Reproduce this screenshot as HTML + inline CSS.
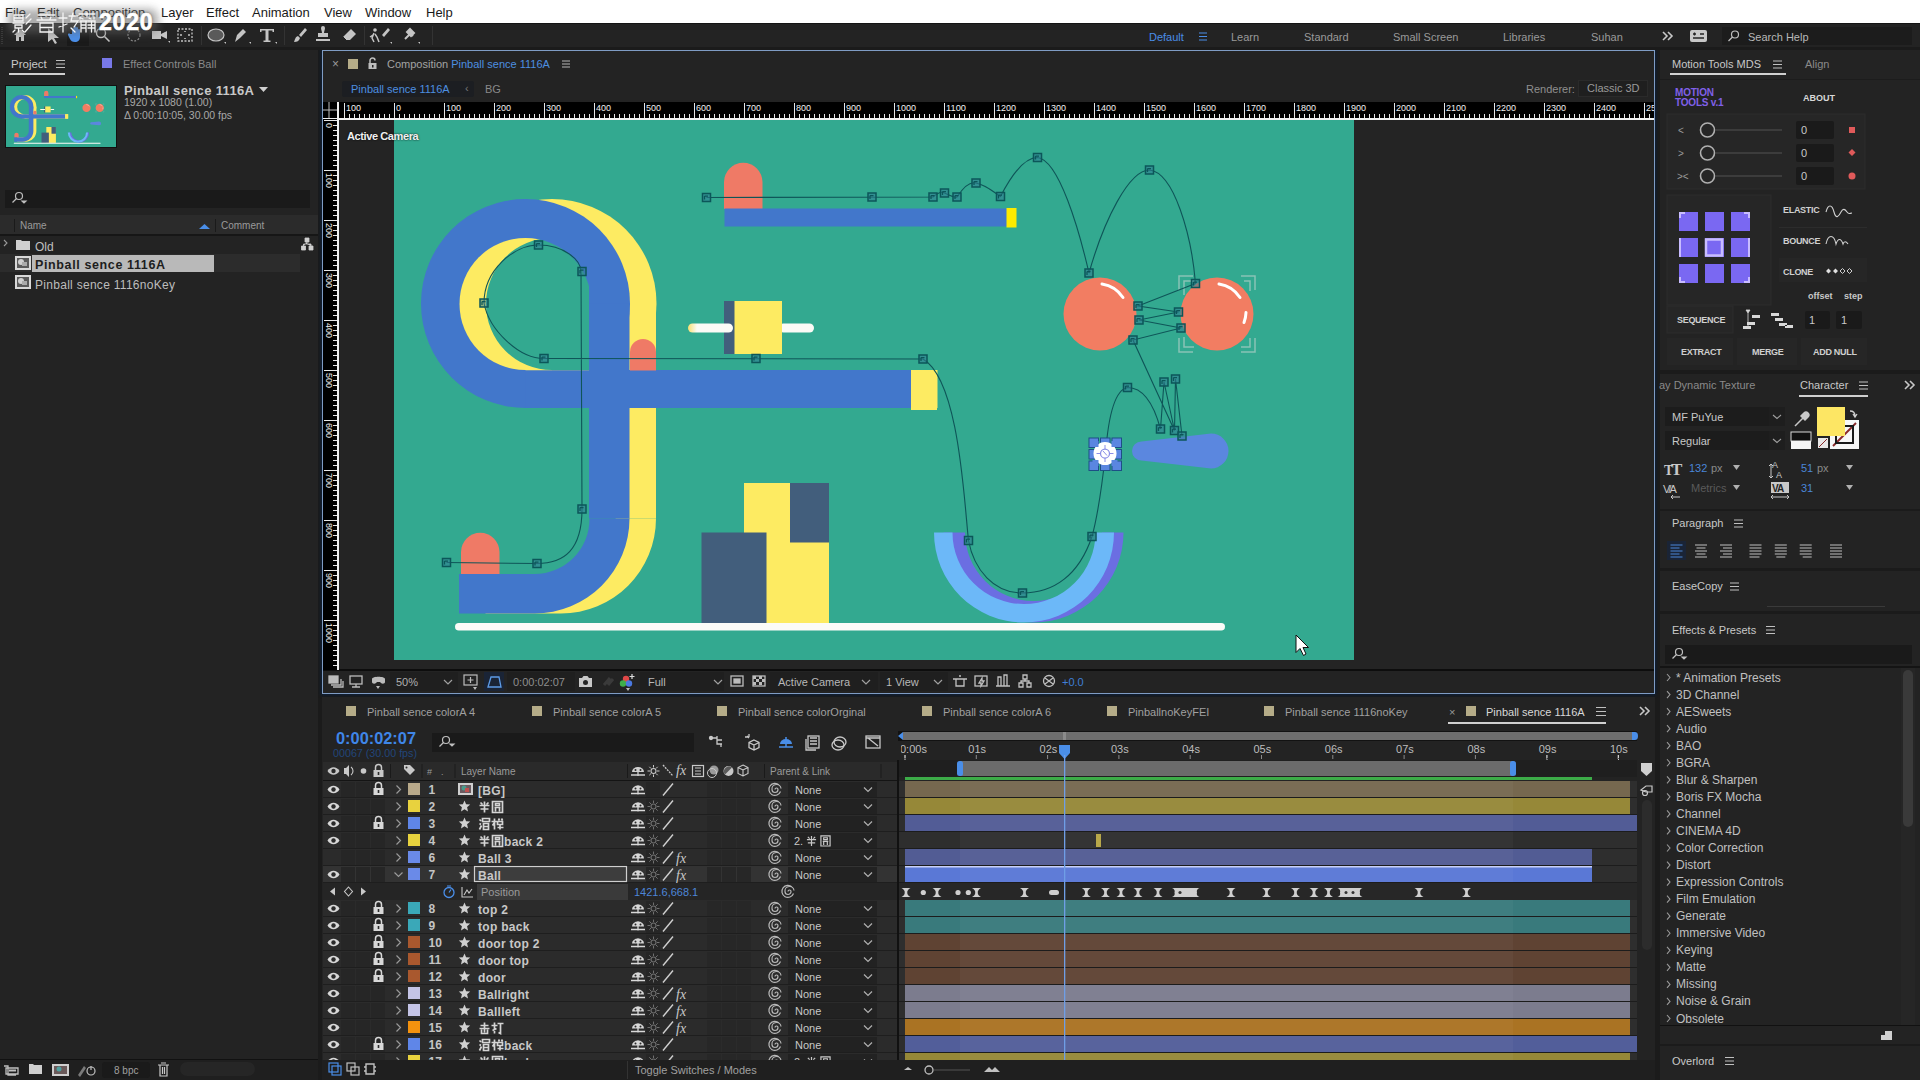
<!DOCTYPE html>
<html><head><meta charset="utf-8"><title>AE</title>
<style>
*{margin:0;padding:0;box-sizing:border-box}
html,body{width:1920px;height:1080px;overflow:hidden;background:#1b1b1b;font-family:"Liberation Sans",sans-serif;color:#a8a8a8;font-size:11px}
.a{position:absolute}
.t{position:absolute;white-space:nowrap;line-height:1}
#menu{left:0;top:0;width:1920px;height:23px;background:#ffffff}
#menu span{position:absolute;top:5px;font-size:13px;color:#1a1a1a}
#tool{left:0;top:23px;width:1920px;height:25px;background:#232323}
.panel{position:absolute;background:#232323}

</style></head><body>
<div id="menu" class="a">
<span style="left:5px">File</span><span style="left:37px">Edit</span><span style="left:73px">Composition</span><span style="left:161px">Layer</span><span style="left:206px">Effect</span><span style="left:252px">Animation</span><span style="left:324px">View</span><span style="left:365px">Window</span><span style="left:426px">Help</span>
</div>


<div class="panel" style="left:322px;top:50px;width:1333px;height:644px;border:1px solid #7f9cc4;box-shadow:0 0 3px 1px #0b1f3a;background:#232323"></div>
<!-- header tab row -->
<div class="t" style="left:332px;top:58px;font-size:12px;color:#9a9a9a">×</div>
<div class="a" style="left:348px;top:59px;width:10px;height:10px;background:#b5ac88"></div>
<svg class="a" style="left:367px;top:57px" width="12" height="13" viewBox="0 0 12 13"><path d="M3 6V3.5a2.5 2.5 0 0 1 5 0" fill="none" stroke="#bdbdbd" stroke-width="1.5"/><rect x="1.5" y="6" width="8" height="6" fill="#bdbdbd"/><rect x="5" y="8" width="1.5" height="2.5" fill="#232323"/></svg>
<div class="t" style="left:387px;top:59px;font-size:11px;color:#a3a3a3">Composition <span style="color:#4d8fe0">Pinball sence 1116A</span></div>
<svg class="a" style="left:561px;top:59px" width="10" height="10"><path d="M1 2h8M1 5h8M1 8h8" stroke="#b5b5b5" stroke-width="1.2"/></svg>
<!-- breadcrumb -->
<div class="a" style="left:342px;top:81px;width:132px;height:16px;background:#1c1e22;border-radius:2px"></div>
<div class="t" style="left:351px;top:84px;font-size:11px;color:#4d8fe0">Pinball sence 1116A</div>
<div class="t" style="left:465px;top:83px;font-size:11px;color:#777">‹</div>
<div class="t" style="left:485px;top:84px;font-size:11px;color:#8a8a8a">BG</div>
<div class="t" style="left:1526px;top:84px;font-size:11px;color:#8f8f8f">Renderer:</div>
<div class="a" style="left:1578px;top:80px;width:70px;height:17px;background:#1f1f1f;border:1px solid #2a2a2a"></div>
<div class="t" style="left:1587px;top:83px;font-size:11px;color:#9a9a9a">Classic 3D</div>
<!-- viewer bg -->
<div class="a" style="left:339px;top:119px;width:1314px;height:551px;background:#242424"></div>
<div class="a" style="left:323px;top:669px;width:1331px;height:2px;background:#0d0d0d"></div>
<!-- comp bottom toolbar -->
<div class="a" style="left:323px;top:671px;width:1331px;height:21px;background:#232323"></div>
<svg class="a" style="left:323px;top:671px" width="740" height="21" viewBox="0 0 740 21">
<g fill="none" stroke="#bcbcbc" stroke-width="1.3">
<rect x="6" y="5" width="9" height="7" fill="#bcbcbc"/><path d="M8 14h10V8M10 16h10V10"/>
<rect x="27" y="5" width="12" height="8"/><path d="M33 13v3M29 16h8"/>
</g>
<path d="M49 8c0-3 13-3 13 0v3c0 2-3 2-4 1l-1-1h-3l-1 1c-1 1-4 1-4-1z" fill="#bcbcbc"/><path d="M53 15l2 3 2-3z" fill="#bcbcbc"/>
<rect x="67" y="1" width="68" height="19" fill="#1f1f1f"/>
<text x="73" y="14.5" font-size="11" fill="#b0b0b0" font-family="Liberation Sans">50%</text>
<path d="M121 9l4 4 4-4" stroke="#a0a0a0" fill="none" stroke-width="1.2"/>
<g fill="none" stroke="#bcbcbc" stroke-width="1.2"><rect x="141" y="4" width="13" height="10"/><path d="M147.5 6v6M144.5 9h6"/></g><path d="M150 16l2 3 2-3z" fill="#bcbcbc"/>
<rect x="161" y="1" width="20" height="19" fill="#1a2436"/>
<path d="M165 16l3-10h8l2 10z" fill="none" stroke="#5d9be6" stroke-width="1.3"/>
<rect x="184" y="1" width="68" height="19" fill="#1f1f1f"/>
<text x="190" y="14.5" font-size="11" fill="#8e8e8e" font-family="Liberation Sans">0:00:02:07</text>
<path d="M256 7h3l1.5-2h4l1.5 2h3v9h-13z" fill="#c8c8c8"/><circle cx="262.5" cy="11.5" r="2.5" fill="#232323"/>
<path d="M281 14l6-7M285 14l5-6" stroke="#3a3a3a" stroke-width="3"/>
<circle cx="303" cy="8" r="3.2" fill="#e04848"/><circle cx="300" cy="12.5" r="3.2" fill="#3fae4a"/><circle cx="306" cy="12.5" r="3.2" fill="#4a78e0"/><path d="M309 3v5M306.5 5.5h5" stroke="#ddd" stroke-width="1.2"/><path d="M303 17l2 3 2-3z" fill="#bcbcbc"/>
<rect x="317" y="1" width="84" height="19" fill="#1f1f1f"/>
<text x="325" y="15" font-size="11" fill="#b8b8b8" font-family="Liberation Sans">Full</text>
<path d="M391 9l4 4 4-4" stroke="#a0a0a0" fill="none" stroke-width="1.2"/>
<g fill="none" stroke="#bcbcbc" stroke-width="1.3"><rect x="408" y="5" width="12" height="10"/><rect x="411" y="8" width="6" height="4" fill="#bcbcbc"/>
<rect x="430" y="5" width="12" height="10"/></g><path d="M430 5h3v3h-3zM436 5h3v3h-3zM433 8h3v3h-3zM439 8h3v3h-3zM430 11h3v3h-3zM436 11h3v3h-3z" fill="#bcbcbc"/>
<rect x="447" y="1" width="108" height="19" fill="#1f1f1f"/>
<text x="455" y="15" font-size="11" fill="#b8b8b8" font-family="Liberation Sans">Active Camera</text>
<path d="M539 9l4 4 4-4" stroke="#a0a0a0" fill="none" stroke-width="1.2"/>
<rect x="557" y="1" width="68" height="19" fill="#1f1f1f"/>
<text x="563" y="15" font-size="11" fill="#b8b8b8" font-family="Liberation Sans">1 View</text>
<path d="M611 9l4 4 4-4" stroke="#a0a0a0" fill="none" stroke-width="1.2"/>
<g fill="none" stroke="#c0c0c0" stroke-width="1.3">
<path d="M630 8h14M633 8v7h8V8M636 5h2"/>
<rect x="652" y="5" width="12" height="10"/><path d="M656 12l3-5v3h2l-3 5v-3z"/>
<path d="M675 15V6h3v9M681 15V4h3v11M673 15h14"/>
<path d="M700 4h4v4h-4zM696 12h4v4h-4zM704 12h4v4h-4zM702 8v2h-4v2M702 10h4v2"/>
<circle cx="726" cy="10" r="5.5"/><path d="M722 7l8 6M722 13l8-6"/>
</g>
</svg>
<div class="t" style="left:1062px;top:677px;font-size:11px;color:#3f7fd8">+0.0</div>


<svg class="a" style="left:0;top:23px" width="1920" height="27" viewBox="0 23 1920 27" font-family="Liberation Sans"><rect x="0" y="23" width="1920" height="24" fill="#232323"/><rect x="0" y="23" width="1920" height="1" fill="#141414"/><rect x="0" y="47" width="1920" height="3" fill="#1b1b1b"/><path d="M2 27v17" stroke="#3a3a3a" stroke-width="2" stroke-dasharray="1 1"/><path d="M14 35l6-6 6 6h-2v6h-3v-4h-2v4h-3v-6z" fill="#c4c4c4"/><path d="M48 28v14l4-3 3 5 2-1-3-5h5z" fill="#c4c4c4"/><rect x="67" y="25" width="22" height="21" fill="#1a1a1a"/><path d="M72 34v-5a1 1 0 0 1 2 0v4v-6a1 1 0 0 1 2 0v6v-5a1 1 0 0 1 2 0v5v-3a1 1 0 0 1 2 0v7c0 3-2 5-5 5s-4-1-5-3l-2-4a1 1 0 0 1 2-1z" fill="#4a8ee8"/><circle cx="101" cy="33" r="4.5" fill="none" stroke="#c4c4c4" stroke-width="1.4"/><path d="M104.5 36.5l5 5" stroke="#c4c4c4" stroke-width="1.6"/><circle cx="134" cy="35" r="6" fill="none" stroke="#8a8a8a" stroke-width="1.2" stroke-dasharray="2 1.5"/><path d="M152 31h9v8h-9z M161 34l6-3v8l-6-3z" fill="#c4c4c4"/><path d="M168 41l2 2v-2z" fill="#c4c4c4"/><rect x="178" y="29" width="14" height="12" fill="none" stroke="#c4c4c4" stroke-width="1.3" stroke-dasharray="2 1.5"/><path d="M182 35l-2 0M188 35l2 0M185 32v-1M185 38v1" stroke="#c4c4c4" stroke-width="1.5"/><rect x="201" y="26" width="1" height="19" fill="#333"/><ellipse cx="216" cy="35" rx="8" ry="6" fill="#5a5a5a" stroke="#c4c4c4" stroke-width="1.2"/><path d="M224 42l2 2v-2z" fill="#c4c4c4"/><path d="M235 42l2-7 6-6 3 3-6 6z" fill="#c4c4c4"/><path d="M249 42l2 2v-2z" fill="#c4c4c4"/><path d="M260 29h14v3h-1.5v-1.5h-4v10h2v1.5h-7v-1.5h2v-10h-4v1.5H260z" fill="#c4c4c4"/><path d="M275 42l2 2v-2z" fill="#c4c4c4"/><rect x="284" y="26" width="1" height="19" fill="#333"/><path d="M305 28l2 2-6 7-2-2z M298 36l2 2c-1 3-3 4-6 4 1-2 1-5 4-6z" fill="#c4c4c4"/><path d="M321 28a2 2 0 0 1 4 0c0 2-1 3-1 5h4v4h-10v-4h4c0-2-1-3-1-5z" fill="#c4c4c4"/><rect x="316" y="39" width="14" height="2" fill="#c4c4c4"/><path d="M346 40l-3-3 8-8 5 5-6 6z" fill="#c4c4c4"/><path d="M343 37l3 3" stroke="#1e1e1e" stroke-width="1"/><rect x="364" y="26" width="1" height="19" fill="#333"/><circle cx="375" cy="30" r="1.8" fill="#c4c4c4"/><path d="M374 33l-2 5 2 4M375 34l2 3 2 5M373 35l-3 2" stroke="#c4c4c4" stroke-width="1.5" fill="none"/><path d="M388 28l2 2-6 7-2-2z" fill="#c4c4c4"/><path d="M390 42l2 2v-2z" fill="#c4c4c4"/><path d="M405 39l4-4M408 31l5 5M410 29l4 4-3 3-4-4z" stroke="#c4c4c4" stroke-width="2" fill="#c4c4c4"/><path d="M418 42l2 2v-2z" fill="#c4c4c4"/><rect x="432" y="26" width="1" height="19" fill="#333"/><text x="1149" y="40.5" font-size="11" fill="#4a8ee8">Default</text><text x="1231" y="40.5" font-size="11" fill="#9a9a9a">Learn</text><text x="1304" y="40.5" font-size="11" fill="#9a9a9a">Standard</text><text x="1393" y="40.5" font-size="11" fill="#9a9a9a">Small Screen</text><text x="1503" y="40.5" font-size="11" fill="#9a9a9a">Libraries</text><text x="1591" y="40.5" font-size="11" fill="#9a9a9a">Suhan</text><path d="M1199 33h8M1199 36.5h8M1199 40h8" stroke="#4a8ee8" stroke-width="1.2"/><path d="M1663 32l4 4-4 4M1668 32l4 4-4 4" stroke="#c8c8c8" stroke-width="1.6" fill="none"/><rect x="1690" y="30" width="17" height="12" rx="2" fill="#c8c8c8"/><path d="M1693 34h3M1694.5 32.5v3M1700 34h4M1693 38h11" stroke="#232323" stroke-width="1.3"/><rect x="1722" y="27" width="190" height="18" fill="#1c1c1c"/><circle cx="1735" cy="34.5" r="3.5" fill="none" stroke="#c0c0c0" stroke-width="1.2"/><path d="M1732.5 37l-4 4" stroke="#c0c0c0" stroke-width="1.3"/><text x="1748" y="40.5" font-size="11" fill="#b8b8b8">Search Help</text></svg><svg class="a" style="left:0;top:50px" width="318" height="1030" viewBox="0 50 318 1030" font-family="Liberation Sans"><rect x="0" y="50" width="318" height="1030" fill="#232323"/><text x="11" y="68" font-size="11.5" fill="#c8c8c8">Project</text><path d="M56 60.5h9M56 64h9M56 67.5h9" stroke="#c0c0c0" stroke-width="1.2"/><rect x="9" y="73" width="56" height="2" fill="#cfcfcf"/><rect x="102" y="58" width="10" height="10" fill="#7878e8"/><text x="123" y="68" font-size="11" fill="#8a8a8a">Effect Controls Ball</text><text x="124" y="94.5" font-size="13" font-weight="bold" fill="#c8c8c8" textLength="130" lengthAdjust="spacing">Pinball sence 1116A</text><path d="M259 87h9l-4.5 5z" fill="#d0d0d0"/><text x="124" y="106" font-size="10.5" fill="#a8a8a8">1920 x 1080 (1.00)</text><text x="124" y="119" font-size="10.5" fill="#a8a8a8">Δ 0:00:10:05, 30.00 fps</text><rect x="5" y="190" width="305" height="18" fill="#1a1a1a"/><circle cx="19" cy="196" r="3.5" fill="none" stroke="#bdbdbd" stroke-width="1.2"/><path d="M16.5 198.5l-4 4M22 201l2 2 2-2z" stroke="#bdbdbd" fill="#bdbdbd" stroke-width="1.2"/><rect x="0" y="215" width="318" height="20" fill="#2b2b2b"/><rect x="0" y="234" width="318" height="2" fill="#161616"/><path d="M14.5 219v13M215.5 219v13" stroke="#1a1a1a"/><text x="20" y="229" font-size="10" fill="#9a9a9a">Name</text><path d="M199 229l5.5-5 5.5 5z" fill="#4a8ee8"/><text x="221" y="229" font-size="10" fill="#9a9a9a">Comment</text><path d="M4 240l3 3-3 3" fill="none" stroke="#9a9a9a" stroke-width="1.1"/><path d="M16 240h5l1 1h8v9H16z" fill="#cfcfcf"/><text x="35" y="250.5" font-size="12" fill="#c0c0c0">Old</text><path d="M305 238h4v4h-4zM301.5 246h4v4h-4zM309 246h4v4h-4zM307 242v2h-3.5v2M307 244h4v2" fill="#cfcfcf" stroke="#cfcfcf" stroke-width="0.8"/><rect x="0" y="254" width="300" height="18" fill="#2c2c2c"/><rect x="32" y="255" width="182" height="17" fill="#b9b9b9"/><rect x="15" y="256" width="16" height="14" fill="#d8d8d8"/><rect x="17" y="258" width="12" height="10" fill="#5a5a5a"/><circle cx="21" cy="262" r="3" fill="#cfcfcf"/><rect x="22" y="262" width="5" height="4" fill="#aaaaaa"/><rect x="15" y="275" width="16" height="14" fill="#d8d8d8"/><rect x="17" y="277" width="12" height="10" fill="#5a5a5a"/><circle cx="21" cy="281" r="3" fill="#cfcfcf"/><rect x="22" y="281" width="5" height="4" fill="#aaaaaa"/><text x="35" y="269" font-size="12.5" font-weight="bold" fill="#1e1e1e" textLength="130" lengthAdjust="spacing">Pinball sence 1116A</text><text x="35" y="288.5" font-size="12" fill="#bdbdbd" textLength="140" lengthAdjust="spacing">Pinball sence 1116noKey</text><rect x="0" y="1060" width="318" height="20" fill="#1f1f1f"/><rect x="0" y="1059" width="318" height="1" fill="#111"/><path d="M4 1066h4v9h8M6 1068h12v6h-12z" fill="none" stroke="#c0c0c0" stroke-width="1.3"/><rect x="9" y="1069.5" width="7" height="2" fill="#c0c0c0"/><path d="M29 1064h4l1 1h8v9H29z" fill="#cfcfcf"/><rect x="52" y="1064" width="17" height="12" fill="#cfcfcf"/><rect x="54" y="1066" width="13" height="8" fill="#6a5a5a"/><circle cx="59" cy="1069" r="2.5" fill="#50a0a0"/><path d="M78 1075l6-9 2 2-6 9z" fill="#7a7a7a"/><circle cx="91" cy="1071" r="4" fill="none" stroke="#c0c0c0" stroke-width="1.2"/><path d="M91 1066v4" stroke="#c0c0c0" stroke-width="1.2"/><rect x="102" y="1062" width="48" height="16" rx="3" fill="#1a1a1a"/><text x="114" y="1073.5" font-size="10" fill="#a0a0a0">8 bpc</text><path d="M158 1065h11M160 1065v11h7v-11M162.5 1067v7M164.5 1067v7M161 1063h5" fill="none" stroke="#c8c8c8" stroke-width="1.2"/><rect x="180" y="1062" width="75" height="14" rx="7" fill="#262626"/></svg><div class="a" style="left:5px;top:85px;width:112px;height:63px;background:#33a990;border:1px solid #111"></div><svg class="a" style="left:6px;top:86px" width="110" height="61" viewBox="0 0 1920 1080"><defs>
<mask id="holet" maskUnits="userSpaceOnUse" x="-200" y="-200" width="2400" height="1500">
<rect x="-200" y="-200" width="2400" height="1500" fill="#fff"/>
<circle cx="263" cy="368" r="132" fill="#000"/>
<rect x="390" y="200" width="120" height="320" fill="#fff"/>
<rect x="263" y="368" width="127" height="132.5" fill="#000"/>
</mask>
<g id="shapet">
<g mask="url(#holet)">
<circle cx="263" cy="367" r="209" fill="inherit"/>
<rect x="390" y="367" width="81" height="430"/>
<rect x="263" y="500" width="771" height="76"/>
</g>
<path d="M390 797 L471 797 A190 190 0 0 1 281 987 L130 987 L130 908 L281 908 A110 110 0 0 0 391 797 Z"/>
</g>
</defs><rect x="0" y="0" width="1920" height="1080" fill="#33a990"/><g fill="#fdeb62" transform="translate(53 0)"><use href="#shapet"/></g><g fill="#4277cb"><use href="#shapet"/></g><path fill="#ef7a66" d="M134 908 V864 A38.5 38.5 0 0 1 211 864 V908Z"/><path fill="#ef7a66" d="M472 501 V464 A26 26 0 0 1 524 464 V501Z"/><path fill="#ef7a66" d="M660 178 V124 A38.5 38.5 0 0 1 737 124 V178Z"/><rect x="661" y="177" width="565" height="36" fill="#4277cb"/><rect x="1225" y="176" width="20" height="39" fill="#fdeb00"/><rect x="1034" y="500" width="52" height="80" fill="#fdeb62"/><rect x="660" y="362" width="22" height="106" fill="#425e7c"/><defs><linearGradient id="plt" x1="0" x2="1"><stop offset="0" stop-color="#f8e070"/><stop offset="0.2" stop-color="#fbfbf6"/></linearGradient></defs><rect x="588" y="407" width="90" height="18" rx="9" fill="url(#plt)"/><rect x="770" y="407" width="70" height="18" rx="9" fill="#fbfbf6"/><rect x="681" y="362" width="95" height="106" fill="#fdeb62"/><rect x="700" y="726" width="170" height="281" fill="#fdeb62"/><rect x="792" y="726" width="78" height="119" fill="#425e7c"/><rect x="615" y="825" width="130" height="182" fill="#425e7c"/><rect x="122" y="1006" width="1540" height="15" rx="7.5" fill="#fbfbf8"/><path fill="#6b6ee2" d="M1099 825 A180 180 0 0 0 1459 825 L1416 825 A137 137 0 0 1 1142 825 Z"/><path fill="#6cb8f8" d="M1080 825 A180 180 0 0 0 1440 825 L1403 825 A143 143 0 0 1 1117 825 Z"/><circle cx="1412" cy="388" r="73" fill="#f27d62"/><path d="M1416 328 A62 62 0 0 1 1458 355" stroke="#fff" stroke-width="6" fill="none" stroke-linecap="round"/><circle cx="1646" cy="388" r="73" fill="#f27d62"/><path d="M1650 328 A62 62 0 0 1 1692 355" stroke="#fff" stroke-width="6" fill="none" stroke-linecap="round"/><path d="M1704 385 A62 62 0 0 1 1700 405" stroke="#fff" stroke-width="6" fill="none" stroke-linecap="round"/><g stroke="#9ec9c0" stroke-width="3" fill="none" opacity="0.8"><path d="M1570 340V312h28M1694 312h28v28M1722 436v28h-28M1598 464h-28v-28"/><path d="M1580 350V322h20M1700 322h12v20M1712 436v18h-18M1600 454h-20v-20"/></g><path fill="#5b87df" d="M1495 643 L1634 627 A35 35 0 0 1 1634 697 L1495 681 A19 19 0 0 1 1495 643Z"/></svg><svg class="a" style="left:323px;top:102px" width="1331" height="18" viewBox="0 0 1331 18"><rect x="0" y="0" width="1331" height="17" fill="#000"/><rect x="0" y="16" width="1331" height="2" fill="#f2f2f2"/><rect x="14" y="0" width="2" height="18" fill="#f2f2f2"/><path d="M6 0v16M0 8h14" stroke="#bdbdbd" stroke-width="1"/><path d="M21.5 1V16M26.5 12V16M31.5 12V16M36.5 12V16M41.5 12V16M46.5 12V16M51.5 12V16M56.5 12V16M61.5 12V16M66.5 12V16M71.5 1V16M76.5 12V16M81.5 12V16M86.5 12V16M91.5 12V16M96.5 12V16M101.5 12V16M106.5 12V16M111.5 12V16M116.5 12V16M121.5 1V16M126.5 12V16M131.5 12V16M136.5 12V16M141.5 12V16M146.5 12V16M151.5 12V16M156.5 12V16M161.5 12V16M166.5 12V16M171.5 1V16M176.5 12V16M181.5 12V16M186.5 12V16M191.5 12V16M196.5 12V16M201.5 12V16M206.5 12V16M211.5 12V16M216.5 12V16M221.5 1V16M226.5 12V16M231.5 12V16M236.5 12V16M241.5 12V16M246.5 12V16M251.5 12V16M256.5 12V16M261.5 12V16M266.5 12V16M271.5 1V16M276.5 12V16M281.5 12V16M286.5 12V16M291.5 12V16M296.5 12V16M301.5 12V16M306.5 12V16M311.5 12V16M316.5 12V16M321.5 1V16M326.5 12V16M331.5 12V16M336.5 12V16M341.5 12V16M346.5 12V16M351.5 12V16M356.5 12V16M361.5 12V16M366.5 12V16M371.5 1V16M376.5 12V16M381.5 12V16M386.5 12V16M391.5 12V16M396.5 12V16M401.5 12V16M406.5 12V16M411.5 12V16M416.5 12V16M421.5 1V16M426.5 12V16M431.5 12V16M436.5 12V16M441.5 12V16M446.5 12V16M451.5 12V16M456.5 12V16M461.5 12V16M466.5 12V16M471.5 1V16M476.5 12V16M481.5 12V16M486.5 12V16M491.5 12V16M496.5 12V16M501.5 12V16M506.5 12V16M511.5 12V16M516.5 12V16M521.5 1V16M526.5 12V16M531.5 12V16M536.5 12V16M541.5 12V16M546.5 12V16M551.5 12V16M556.5 12V16M561.5 12V16M566.5 12V16M571.5 1V16M576.5 12V16M581.5 12V16M586.5 12V16M591.5 12V16M596.5 12V16M601.5 12V16M606.5 12V16M611.5 12V16M616.5 12V16M621.5 1V16M626.5 12V16M631.5 12V16M636.5 12V16M641.5 12V16M646.5 12V16M651.5 12V16M656.5 12V16M661.5 12V16M666.5 12V16M671.5 1V16M676.5 12V16M681.5 12V16M686.5 12V16M691.5 12V16M696.5 12V16M701.5 12V16M706.5 12V16M711.5 12V16M716.5 12V16M721.5 1V16M726.5 12V16M731.5 12V16M736.5 12V16M741.5 12V16M746.5 12V16M751.5 12V16M756.5 12V16M761.5 12V16M766.5 12V16M771.5 1V16M776.5 12V16M781.5 12V16M786.5 12V16M791.5 12V16M796.5 12V16M801.5 12V16M806.5 12V16M811.5 12V16M816.5 12V16M821.5 1V16M826.5 12V16M831.5 12V16M836.5 12V16M841.5 12V16M846.5 12V16M851.5 12V16M856.5 12V16M861.5 12V16M866.5 12V16M871.5 1V16M876.5 12V16M881.5 12V16M886.5 12V16M891.5 12V16M896.5 12V16M901.5 12V16M906.5 12V16M911.5 12V16M916.5 12V16M921.5 1V16M926.5 12V16M931.5 12V16M936.5 12V16M941.5 12V16M946.5 12V16M951.5 12V16M956.5 12V16M961.5 12V16M966.5 12V16M971.5 1V16M976.5 12V16M981.5 12V16M986.5 12V16M991.5 12V16M996.5 12V16M1001.5 12V16M1006.5 12V16M1011.5 12V16M1016.5 12V16M1021.5 1V16M1026.5 12V16M1031.5 12V16M1036.5 12V16M1041.5 12V16M1046.5 12V16M1051.5 12V16M1056.5 12V16M1061.5 12V16M1066.5 12V16M1071.5 1V16M1076.5 12V16M1081.5 12V16M1086.5 12V16M1091.5 12V16M1096.5 12V16M1101.5 12V16M1106.5 12V16M1111.5 12V16M1116.5 12V16M1121.5 1V16M1126.5 12V16M1131.5 12V16M1136.5 12V16M1141.5 12V16M1146.5 12V16M1151.5 12V16M1156.5 12V16M1161.5 12V16M1166.5 12V16M1171.5 1V16M1176.5 12V16M1181.5 12V16M1186.5 12V16M1191.5 12V16M1196.5 12V16M1201.5 12V16M1206.5 12V16M1211.5 12V16M1216.5 12V16M1221.5 1V16M1226.5 12V16M1231.5 12V16M1236.5 12V16M1241.5 12V16M1246.5 12V16M1251.5 12V16M1256.5 12V16M1261.5 12V16M1266.5 12V16M1271.5 1V16M1276.5 12V16M1281.5 12V16M1286.5 12V16M1291.5 12V16M1296.5 12V16M1301.5 12V16M1306.5 12V16M1311.5 12V16M1316.5 12V16M1321.5 1V16M1326.5 12V16M1331.5 12V16" stroke="#e8e8e8" stroke-width="1"/><text x="23" y="9" font-size="9" fill="#f0f0f0" font-family="Liberation Sans" textLength="15" lengthAdjust="spacingAndGlyphs">100</text><text x="73" y="9" font-size="9" fill="#f0f0f0" font-family="Liberation Sans" textLength="5" lengthAdjust="spacingAndGlyphs">0</text><text x="123" y="9" font-size="9" fill="#f0f0f0" font-family="Liberation Sans" textLength="15" lengthAdjust="spacingAndGlyphs">100</text><text x="173" y="9" font-size="9" fill="#f0f0f0" font-family="Liberation Sans" textLength="15" lengthAdjust="spacingAndGlyphs">200</text><text x="223" y="9" font-size="9" fill="#f0f0f0" font-family="Liberation Sans" textLength="15" lengthAdjust="spacingAndGlyphs">300</text><text x="273" y="9" font-size="9" fill="#f0f0f0" font-family="Liberation Sans" textLength="15" lengthAdjust="spacingAndGlyphs">400</text><text x="323" y="9" font-size="9" fill="#f0f0f0" font-family="Liberation Sans" textLength="15" lengthAdjust="spacingAndGlyphs">500</text><text x="373" y="9" font-size="9" fill="#f0f0f0" font-family="Liberation Sans" textLength="15" lengthAdjust="spacingAndGlyphs">600</text><text x="423" y="9" font-size="9" fill="#f0f0f0" font-family="Liberation Sans" textLength="15" lengthAdjust="spacingAndGlyphs">700</text><text x="473" y="9" font-size="9" fill="#f0f0f0" font-family="Liberation Sans" textLength="15" lengthAdjust="spacingAndGlyphs">800</text><text x="523" y="9" font-size="9" fill="#f0f0f0" font-family="Liberation Sans" textLength="15" lengthAdjust="spacingAndGlyphs">900</text><text x="573" y="9" font-size="9" fill="#f0f0f0" font-family="Liberation Sans" textLength="20" lengthAdjust="spacingAndGlyphs">1000</text><text x="623" y="9" font-size="9" fill="#f0f0f0" font-family="Liberation Sans" textLength="20" lengthAdjust="spacingAndGlyphs">1100</text><text x="673" y="9" font-size="9" fill="#f0f0f0" font-family="Liberation Sans" textLength="20" lengthAdjust="spacingAndGlyphs">1200</text><text x="723" y="9" font-size="9" fill="#f0f0f0" font-family="Liberation Sans" textLength="20" lengthAdjust="spacingAndGlyphs">1300</text><text x="773" y="9" font-size="9" fill="#f0f0f0" font-family="Liberation Sans" textLength="20" lengthAdjust="spacingAndGlyphs">1400</text><text x="823" y="9" font-size="9" fill="#f0f0f0" font-family="Liberation Sans" textLength="20" lengthAdjust="spacingAndGlyphs">1500</text><text x="873" y="9" font-size="9" fill="#f0f0f0" font-family="Liberation Sans" textLength="20" lengthAdjust="spacingAndGlyphs">1600</text><text x="923" y="9" font-size="9" fill="#f0f0f0" font-family="Liberation Sans" textLength="20" lengthAdjust="spacingAndGlyphs">1700</text><text x="973" y="9" font-size="9" fill="#f0f0f0" font-family="Liberation Sans" textLength="20" lengthAdjust="spacingAndGlyphs">1800</text><text x="1023" y="9" font-size="9" fill="#f0f0f0" font-family="Liberation Sans" textLength="20" lengthAdjust="spacingAndGlyphs">1900</text><text x="1073" y="9" font-size="9" fill="#f0f0f0" font-family="Liberation Sans" textLength="20" lengthAdjust="spacingAndGlyphs">2000</text><text x="1123" y="9" font-size="9" fill="#f0f0f0" font-family="Liberation Sans" textLength="20" lengthAdjust="spacingAndGlyphs">2100</text><text x="1173" y="9" font-size="9" fill="#f0f0f0" font-family="Liberation Sans" textLength="20" lengthAdjust="spacingAndGlyphs">2200</text><text x="1223" y="9" font-size="9" fill="#f0f0f0" font-family="Liberation Sans" textLength="20" lengthAdjust="spacingAndGlyphs">2300</text><text x="1273" y="9" font-size="9" fill="#f0f0f0" font-family="Liberation Sans" textLength="20" lengthAdjust="spacingAndGlyphs">2400</text><text x="1323" y="9" font-size="9" fill="#f0f0f0" font-family="Liberation Sans" textLength="20" lengthAdjust="spacingAndGlyphs">2500</text></svg><svg class="a" style="left:323px;top:119px" width="16" height="551" viewBox="0 0 16 551"><rect x="0" y="0" width="14" height="551" fill="#000"/><rect x="14" y="0" width="2" height="551" fill="#f2f2f2"/><path d="M1 1.5H14M10 6.5H14M10 11.5H14M10 16.5H14M10 21.5H14M10 26.5H14M10 31.5H14M10 36.5H14M10 41.5H14M10 46.5H14M1 51.5H14M10 56.5H14M10 61.5H14M10 66.5H14M10 71.5H14M10 76.5H14M10 81.5H14M10 86.5H14M10 91.5H14M10 96.5H14M1 101.5H14M10 106.5H14M10 111.5H14M10 116.5H14M10 121.5H14M10 126.5H14M10 131.5H14M10 136.5H14M10 141.5H14M10 146.5H14M1 151.5H14M10 156.5H14M10 161.5H14M10 166.5H14M10 171.5H14M10 176.5H14M10 181.5H14M10 186.5H14M10 191.5H14M10 196.5H14M1 201.5H14M10 206.5H14M10 211.5H14M10 216.5H14M10 221.5H14M10 226.5H14M10 231.5H14M10 236.5H14M10 241.5H14M10 246.5H14M1 251.5H14M10 256.5H14M10 261.5H14M10 266.5H14M10 271.5H14M10 276.5H14M10 281.5H14M10 286.5H14M10 291.5H14M10 296.5H14M1 301.5H14M10 306.5H14M10 311.5H14M10 316.5H14M10 321.5H14M10 326.5H14M10 331.5H14M10 336.5H14M10 341.5H14M10 346.5H14M1 351.5H14M10 356.5H14M10 361.5H14M10 366.5H14M10 371.5H14M10 376.5H14M10 381.5H14M10 386.5H14M10 391.5H14M10 396.5H14M1 401.5H14M10 406.5H14M10 411.5H14M10 416.5H14M10 421.5H14M10 426.5H14M10 431.5H14M10 436.5H14M10 441.5H14M10 446.5H14M1 451.5H14M10 456.5H14M10 461.5H14M10 466.5H14M10 471.5H14M10 476.5H14M10 481.5H14M10 486.5H14M10 491.5H14M10 496.5H14M1 501.5H14M10 506.5H14M10 511.5H14M10 516.5H14M10 521.5H14M10 526.5H14M10 531.5H14M10 536.5H14M10 541.5H14M10 546.5H14M1 551.5H14" stroke="#e8e8e8" stroke-width="1"/><text transform="translate(2 4) rotate(90)" font-size="9" fill="#f0f0f0" font-family="Liberation Sans" textLength="5" lengthAdjust="spacingAndGlyphs" dy="-1">0</text><text transform="translate(2 54) rotate(90)" font-size="9" fill="#f0f0f0" font-family="Liberation Sans" textLength="15" lengthAdjust="spacingAndGlyphs" dy="-1">100</text><text transform="translate(2 104) rotate(90)" font-size="9" fill="#f0f0f0" font-family="Liberation Sans" textLength="15" lengthAdjust="spacingAndGlyphs" dy="-1">200</text><text transform="translate(2 154) rotate(90)" font-size="9" fill="#f0f0f0" font-family="Liberation Sans" textLength="15" lengthAdjust="spacingAndGlyphs" dy="-1">300</text><text transform="translate(2 204) rotate(90)" font-size="9" fill="#f0f0f0" font-family="Liberation Sans" textLength="15" lengthAdjust="spacingAndGlyphs" dy="-1">400</text><text transform="translate(2 254) rotate(90)" font-size="9" fill="#f0f0f0" font-family="Liberation Sans" textLength="15" lengthAdjust="spacingAndGlyphs" dy="-1">500</text><text transform="translate(2 304) rotate(90)" font-size="9" fill="#f0f0f0" font-family="Liberation Sans" textLength="15" lengthAdjust="spacingAndGlyphs" dy="-1">600</text><text transform="translate(2 354) rotate(90)" font-size="9" fill="#f0f0f0" font-family="Liberation Sans" textLength="15" lengthAdjust="spacingAndGlyphs" dy="-1">700</text><text transform="translate(2 404) rotate(90)" font-size="9" fill="#f0f0f0" font-family="Liberation Sans" textLength="15" lengthAdjust="spacingAndGlyphs" dy="-1">800</text><text transform="translate(2 454) rotate(90)" font-size="9" fill="#f0f0f0" font-family="Liberation Sans" textLength="15" lengthAdjust="spacingAndGlyphs" dy="-1">900</text><text transform="translate(2 504) rotate(90)" font-size="9" fill="#f0f0f0" font-family="Liberation Sans" textLength="20" lengthAdjust="spacingAndGlyphs" dy="-1">1000</text><text transform="translate(2 554) rotate(90)" font-size="9" fill="#f0f0f0" font-family="Liberation Sans" textLength="20" lengthAdjust="spacingAndGlyphs" dy="-1">1100</text></svg><svg class="a" style="left:394px;top:120px" width="960" height="540" viewBox="0 0 1920 1080"><defs>
<mask id="hole" maskUnits="userSpaceOnUse" x="-200" y="-200" width="2400" height="1500">
<rect x="-200" y="-200" width="2400" height="1500" fill="#fff"/>
<circle cx="263" cy="368" r="132" fill="#000"/>
<rect x="390" y="200" width="120" height="320" fill="#fff"/>
<rect x="263" y="368" width="127" height="132.5" fill="#000"/>
</mask>
<g id="shape">
<g mask="url(#hole)">
<circle cx="263" cy="367" r="209" fill="inherit"/>
<rect x="390" y="367" width="81" height="430"/>
<rect x="263" y="500" width="771" height="76"/>
</g>
<path d="M390 797 L471 797 A190 190 0 0 1 281 987 L130 987 L130 908 L281 908 A110 110 0 0 0 391 797 Z"/>
</g>
</defs><rect x="0" y="0" width="1920" height="1080" fill="#33a990"/><g fill="#fdeb62" transform="translate(53 0)"><use href="#shape"/></g><g fill="#4277cb"><use href="#shape"/></g><path fill="#ef7a66" d="M134 908 V864 A38.5 38.5 0 0 1 211 864 V908Z"/><path fill="#ef7a66" d="M472 501 V464 A26 26 0 0 1 524 464 V501Z"/><path fill="#ef7a66" d="M660 178 V124 A38.5 38.5 0 0 1 737 124 V178Z"/><rect x="661" y="177" width="565" height="36" fill="#4277cb"/><rect x="1225" y="176" width="20" height="39" fill="#fdeb00"/><rect x="1034" y="500" width="52" height="80" fill="#fdeb62"/><rect x="660" y="362" width="22" height="106" fill="#425e7c"/><defs><linearGradient id="pl" x1="0" x2="1"><stop offset="0" stop-color="#f8e070"/><stop offset="0.2" stop-color="#fbfbf6"/></linearGradient></defs><rect x="588" y="407" width="90" height="18" rx="9" fill="url(#pl)"/><rect x="770" y="407" width="70" height="18" rx="9" fill="#fbfbf6"/><rect x="681" y="362" width="95" height="106" fill="#fdeb62"/><rect x="700" y="726" width="170" height="281" fill="#fdeb62"/><rect x="792" y="726" width="78" height="119" fill="#425e7c"/><rect x="615" y="825" width="130" height="182" fill="#425e7c"/><rect x="122" y="1006" width="1540" height="15" rx="7.5" fill="#fbfbf8"/><path fill="#6b6ee2" d="M1099 825 A180 180 0 0 0 1459 825 L1416 825 A137 137 0 0 1 1142 825 Z"/><path fill="#6cb8f8" d="M1080 825 A180 180 0 0 0 1440 825 L1403 825 A143 143 0 0 1 1117 825 Z"/><circle cx="1412" cy="388" r="73" fill="#f27d62"/><path d="M1416 328 A62 62 0 0 1 1458 355" stroke="#fff" stroke-width="6" fill="none" stroke-linecap="round"/><circle cx="1646" cy="388" r="73" fill="#f27d62"/><path d="M1650 328 A62 62 0 0 1 1692 355" stroke="#fff" stroke-width="6" fill="none" stroke-linecap="round"/><path d="M1704 385 A62 62 0 0 1 1700 405" stroke="#fff" stroke-width="6" fill="none" stroke-linecap="round"/><g stroke="#9ec9c0" stroke-width="3" fill="none" opacity="0.8"><path d="M1570 340V312h28M1694 312h28v28M1722 436v28h-28M1598 464h-28v-28"/><path d="M1580 350V322h20M1700 322h12v20M1712 436v18h-18M1600 454h-20v-20"/></g><path fill="#5b87df" d="M1495 643 L1634 627 A35 35 0 0 1 1634 697 L1495 681 A19 19 0 0 1 1495 643Z"/><g fill="none" stroke="#0f5558" stroke-width="2.2"><path d="M625 155 L1078 154 C1085 148 1095 142 1101 146 C1110 150 1120 156 1126 154 C1135 140 1150 122 1164 126 C1185 130 1200 145 1213 153 C1235 110 1262 75 1287 75 C1330 80 1370 220 1390 306 C1420 200 1470 100 1511 100 C1560 105 1595 230 1603 327"/><path d="M1603 327 L1488 372 L1569 384 L1490 400 L1574 416 L1478 440 L1561 621 M1540 524 L1533 618 M1540 524 L1561 621 M1563 518 L1561 621 M1563 518 L1576 632"/><path d="M1533 618 C1520 570 1500 535 1467 535 C1440 540 1428 600 1423 668 C1415 740 1405 800 1396 833 C1370 910 1320 946 1257 946 C1200 946 1160 900 1149 841 C1140 760 1130 520 1058 478 L300 477 C250 477 190 420 180 366 C180 300 240 250 289 250 C340 250 374 280 374 303 L376 778 C376 860 340 887 286 887 L105 885"/></g><rect x="97" y="877" width="16" height="16" fill="#2f7c92" fill-opacity="0.55" stroke="#0c5659" stroke-width="3"/><path d="M101 882h7M101 882v7" stroke="#0c5659" stroke-width="2.5"/><rect x="278" y="879" width="16" height="16" fill="#2f7c92" fill-opacity="0.55" stroke="#0c5659" stroke-width="3"/><path d="M282 884h7M282 884v7" stroke="#0c5659" stroke-width="2.5"/><rect x="368" y="770" width="16" height="16" fill="#2f7c92" fill-opacity="0.55" stroke="#0c5659" stroke-width="3"/><path d="M372 775h7M372 775v7" stroke="#0c5659" stroke-width="2.5"/><rect x="368" y="295" width="16" height="16" fill="#2f7c92" fill-opacity="0.55" stroke="#0c5659" stroke-width="3"/><path d="M372 300h7M372 300v7" stroke="#0c5659" stroke-width="2.5"/><rect x="281" y="242" width="16" height="16" fill="#2f7c92" fill-opacity="0.55" stroke="#0c5659" stroke-width="3"/><path d="M285 247h7M285 247v7" stroke="#0c5659" stroke-width="2.5"/><rect x="172" y="358" width="16" height="16" fill="#2f7c92" fill-opacity="0.55" stroke="#0c5659" stroke-width="3"/><path d="M176 363h7M176 363v7" stroke="#0c5659" stroke-width="2.5"/><rect x="292" y="469" width="16" height="16" fill="#2f7c92" fill-opacity="0.55" stroke="#0c5659" stroke-width="3"/><path d="M296 474h7M296 474v7" stroke="#0c5659" stroke-width="2.5"/><rect x="716" y="469" width="16" height="16" fill="#2f7c92" fill-opacity="0.55" stroke="#0c5659" stroke-width="3"/><path d="M720 474h7M720 474v7" stroke="#0c5659" stroke-width="2.5"/><rect x="1050" y="470" width="16" height="16" fill="#2f7c92" fill-opacity="0.55" stroke="#0c5659" stroke-width="3"/><path d="M1054 475h7M1054 475v7" stroke="#0c5659" stroke-width="2.5"/><rect x="1141" y="833" width="16" height="16" fill="#2f7c92" fill-opacity="0.55" stroke="#0c5659" stroke-width="3"/><path d="M1145 838h7M1145 838v7" stroke="#0c5659" stroke-width="2.5"/><rect x="1249" y="938" width="16" height="16" fill="#2f7c92" fill-opacity="0.55" stroke="#0c5659" stroke-width="3"/><path d="M1253 943h7M1253 943v7" stroke="#0c5659" stroke-width="2.5"/><rect x="1388" y="825" width="16" height="16" fill="#2f7c92" fill-opacity="0.55" stroke="#0c5659" stroke-width="3"/><path d="M1392 830h7M1392 830v7" stroke="#0c5659" stroke-width="2.5"/><rect x="1459" y="527" width="16" height="16" fill="#2f7c92" fill-opacity="0.55" stroke="#0c5659" stroke-width="3"/><path d="M1463 532h7M1463 532v7" stroke="#0c5659" stroke-width="2.5"/><rect x="1525" y="610" width="16" height="16" fill="#2f7c92" fill-opacity="0.55" stroke="#0c5659" stroke-width="3"/><path d="M1529 615h7M1529 615v7" stroke="#0c5659" stroke-width="2.5"/><rect x="1553" y="613" width="16" height="16" fill="#2f7c92" fill-opacity="0.55" stroke="#0c5659" stroke-width="3"/><path d="M1557 618h7M1557 618v7" stroke="#0c5659" stroke-width="2.5"/><rect x="1568" y="624" width="16" height="16" fill="#2f7c92" fill-opacity="0.55" stroke="#0c5659" stroke-width="3"/><path d="M1572 629h7M1572 629v7" stroke="#0c5659" stroke-width="2.5"/><rect x="1532" y="516" width="16" height="16" fill="#2f7c92" fill-opacity="0.55" stroke="#0c5659" stroke-width="3"/><path d="M1536 521h7M1536 521v7" stroke="#0c5659" stroke-width="2.5"/><rect x="1555" y="510" width="16" height="16" fill="#2f7c92" fill-opacity="0.55" stroke="#0c5659" stroke-width="3"/><path d="M1559 515h7M1559 515v7" stroke="#0c5659" stroke-width="2.5"/><rect x="1470" y="432" width="16" height="16" fill="#2f7c92" fill-opacity="0.55" stroke="#0c5659" stroke-width="3"/><path d="M1474 437h7M1474 437v7" stroke="#0c5659" stroke-width="2.5"/><rect x="1480" y="364" width="16" height="16" fill="#2f7c92" fill-opacity="0.55" stroke="#0c5659" stroke-width="3"/><path d="M1484 369h7M1484 369v7" stroke="#0c5659" stroke-width="2.5"/><rect x="1482" y="392" width="16" height="16" fill="#2f7c92" fill-opacity="0.55" stroke="#0c5659" stroke-width="3"/><path d="M1486 397h7M1486 397v7" stroke="#0c5659" stroke-width="2.5"/><rect x="1561" y="376" width="16" height="16" fill="#2f7c92" fill-opacity="0.55" stroke="#0c5659" stroke-width="3"/><path d="M1565 381h7M1565 381v7" stroke="#0c5659" stroke-width="2.5"/><rect x="1566" y="408" width="16" height="16" fill="#2f7c92" fill-opacity="0.55" stroke="#0c5659" stroke-width="3"/><path d="M1570 413h7M1570 413v7" stroke="#0c5659" stroke-width="2.5"/><rect x="1595" y="319" width="16" height="16" fill="#2f7c92" fill-opacity="0.55" stroke="#0c5659" stroke-width="3"/><path d="M1599 324h7M1599 324v7" stroke="#0c5659" stroke-width="2.5"/><rect x="1503" y="92" width="16" height="16" fill="#2f7c92" fill-opacity="0.55" stroke="#0c5659" stroke-width="3"/><path d="M1507 97h7M1507 97v7" stroke="#0c5659" stroke-width="2.5"/><rect x="1382" y="298" width="16" height="16" fill="#2f7c92" fill-opacity="0.55" stroke="#0c5659" stroke-width="3"/><path d="M1386 303h7M1386 303v7" stroke="#0c5659" stroke-width="2.5"/><rect x="1279" y="67" width="16" height="16" fill="#2f7c92" fill-opacity="0.55" stroke="#0c5659" stroke-width="3"/><path d="M1283 72h7M1283 72v7" stroke="#0c5659" stroke-width="2.5"/><rect x="1205" y="145" width="16" height="16" fill="#2f7c92" fill-opacity="0.55" stroke="#0c5659" stroke-width="3"/><path d="M1209 150h7M1209 150v7" stroke="#0c5659" stroke-width="2.5"/><rect x="1156" y="118" width="16" height="16" fill="#2f7c92" fill-opacity="0.55" stroke="#0c5659" stroke-width="3"/><path d="M1160 123h7M1160 123v7" stroke="#0c5659" stroke-width="2.5"/><rect x="1118" y="146" width="16" height="16" fill="#2f7c92" fill-opacity="0.55" stroke="#0c5659" stroke-width="3"/><path d="M1122 151h7M1122 151v7" stroke="#0c5659" stroke-width="2.5"/><rect x="1093" y="138" width="16" height="16" fill="#2f7c92" fill-opacity="0.55" stroke="#0c5659" stroke-width="3"/><path d="M1097 143h7M1097 143v7" stroke="#0c5659" stroke-width="2.5"/><rect x="1070" y="146" width="16" height="16" fill="#2f7c92" fill-opacity="0.55" stroke="#0c5659" stroke-width="3"/><path d="M1074 151h7M1074 151v7" stroke="#0c5659" stroke-width="2.5"/><rect x="948" y="146" width="16" height="16" fill="#2f7c92" fill-opacity="0.55" stroke="#0c5659" stroke-width="3"/><path d="M952 151h7M952 151v7" stroke="#0c5659" stroke-width="2.5"/><rect x="617" y="147" width="16" height="16" fill="#2f7c92" fill-opacity="0.55" stroke="#0c5659" stroke-width="3"/><path d="M621 152h7M621 152v7" stroke="#0c5659" stroke-width="2.5"/><g><rect x="1390" y="636" width="19" height="19" fill="#5a86e0" stroke="#1d4f86" stroke-width="2"/><rect x="1390" y="659" width="19" height="19" fill="#5a86e0" stroke="#1d4f86" stroke-width="2"/><rect x="1390" y="682" width="19" height="19" fill="#5a86e0" stroke="#1d4f86" stroke-width="2"/><rect x="1413" y="636" width="19" height="19" fill="#5a86e0" stroke="#1d4f86" stroke-width="2"/><rect x="1413" y="659" width="19" height="19" fill="#5a86e0" stroke="#1d4f86" stroke-width="2"/><rect x="1413" y="682" width="19" height="19" fill="#5a86e0" stroke="#1d4f86" stroke-width="2"/><rect x="1436" y="636" width="19" height="19" fill="#5a86e0" stroke="#1d4f86" stroke-width="2"/><rect x="1436" y="659" width="19" height="19" fill="#5a86e0" stroke="#1d4f86" stroke-width="2"/><rect x="1436" y="682" width="19" height="19" fill="#5a86e0" stroke="#1d4f86" stroke-width="2"/><circle cx="1422" cy="667" r="23" fill="#ffffff"/><rect x="1397" y="642" width="12" height="12" fill="#5a86e0"/><rect x="1435" y="642" width="12" height="12" fill="#5a86e0"/><rect x="1397" y="680" width="12" height="12" fill="#5a86e0"/><rect x="1435" y="680" width="12" height="12" fill="#5a86e0"/><circle cx="1422" cy="667" r="9" fill="none" stroke="#8a8ee6" stroke-width="2.5"/><path d="M1422 650v8M1422 676v8M1405 667h8M1431 667h8M1418 662l8 9" stroke="#8a8ee6" stroke-width="2"/></g><path d="M1804 1030 L1804 1065 L1812 1057 L1819 1071 L1824 1068 L1818 1055 L1829 1055 Z" fill="#fff" stroke="#111" stroke-width="2"/></svg><svg class="a" style="left:322px;top:697px" width="1333" height="383" viewBox="322 697 1333 383" font-family="Liberation Sans"><rect x="322" y="697" width="1333" height="383" fill="#232323"/><rect x="346" y="706" width="10" height="10" fill="#b5ac88"/><text x="367" y="716" font-size="11" fill="#a0a0a0">Pinball sence colorA 4</text><rect x="532" y="706" width="10" height="10" fill="#b5ac88"/><text x="553" y="716" font-size="11" fill="#a0a0a0">Pinball sence colorA 5</text><rect x="717" y="706" width="10" height="10" fill="#b5ac88"/><text x="738" y="716" font-size="11" fill="#a0a0a0">Pinball sence colorOrginal</text><rect x="922" y="706" width="10" height="10" fill="#b5ac88"/><text x="943" y="716" font-size="11" fill="#a0a0a0">Pinball sence colorA 6</text><rect x="1107" y="706" width="10" height="10" fill="#b5ac88"/><text x="1128" y="716" font-size="11" fill="#a0a0a0">PinballnoKeyFEI</text><rect x="1264" y="706" width="10" height="10" fill="#b5ac88"/><text x="1285" y="716" font-size="11" fill="#a0a0a0">Pinball sence 1116noKey</text><rect x="1466" y="706" width="10" height="10" fill="#b5ac88"/><text x="1486" y="716" font-size="11" fill="#d8d8d8">Pinball sence 1116A</text><text x="1449" y="716" font-size="11" fill="#9a9a9a">×</text><path d="M1596 707.5h10M1596 711.5h10M1596 715.5h10" stroke="#c0c0c0" stroke-width="1.2"/><rect x="1448" y="722" width="158" height="2" fill="#d0d0d0"/><path d="M1640 707l4 4-4 4M1645 707l4 4-4 4" stroke="#c8c8c8" stroke-width="1.6" fill="none"/><text x="336" y="744" font-size="16" font-weight="bold" fill="#3f86e8" textLength="80" lengthAdjust="spacingAndGlyphs">0:00:02:07</text><text x="333" y="756.5" font-size="10" fill="#22467a" textLength="84" lengthAdjust="spacingAndGlyphs">00067 (30.00 fps)</text><rect x="432" y="733" width="262" height="19" fill="#1a1a1a"/><circle cx="446" cy="740" r="3.5" fill="none" stroke="#c0c0c0" stroke-width="1.2"/><path d="M443.5 742.5l-4 4M450 744l2 2 2-2z" stroke="#c0c0c0" fill="#c0c0c0" stroke-width="1.2"/><g fill="none" stroke="#c8c8c8" stroke-width="1.3"><path d="M711 738h6M717 736v8h5M717 740h5M721 744v3"/><circle cx="711" cy="738" r="1.5" fill="#c8c8c8"/><path d="M747 736l2 2M749 734v3M745 737h3"/><path d="M754 740l5 2.5v5l-5 2.5-5-2.5v-5z M749 742.5l5 2.5 5-2.5M754 745v5"/></g><path d="M780 744a6 5 0 0 1 12 0z" fill="#4a8ee8"/><path d="M779 747h14M786 737v10" stroke="#4a8ee8" stroke-width="1.5"/><g fill="none" stroke="#c8c8c8" stroke-width="1.3"><rect x="808" y="736" width="11" height="12"/><path d="M810 738h7M810 741h7M810 744h7M806 739v11h10"/><ellipse cx="840" cy="742" rx="6" ry="5"/><ellipse cx="838" cy="745" rx="6" ry="5"/><rect x="866" y="736" width="14" height="12"/><path d="M868 738l10 8M866 738h14"/></g><rect x="898" y="731" width="739" height="10" fill="#121212"/><rect x="903" y="732" width="730" height="8" fill="#6e6e6e"/><rect x="1063" y="732" width="3" height="8" fill="#8a8a8a"/><path d="M898 736l5-4v8z" fill="#4a8ee8"/><path d="M1632 732h3a3 4 0 0 1 0 8h-3z" fill="#4a8ee8"/><text x="900.0" y="753" font-size="11" fill="#bdbdbd">0:00s</text><path d="M905.0 755v4" stroke="#8a8a8a" stroke-width="1"/><text x="968.3" y="753" font-size="11" fill="#bdbdbd">01s</text><path d="M976.3 755v4" stroke="#8a8a8a" stroke-width="1"/><text x="1039.6" y="753" font-size="11" fill="#bdbdbd">02s</text><path d="M1047.6 755v4" stroke="#8a8a8a" stroke-width="1"/><text x="1110.9" y="753" font-size="11" fill="#bdbdbd">03s</text><path d="M1118.9 755v4" stroke="#8a8a8a" stroke-width="1"/><text x="1182.2" y="753" font-size="11" fill="#bdbdbd">04s</text><path d="M1190.2 755v4" stroke="#8a8a8a" stroke-width="1"/><text x="1253.5" y="753" font-size="11" fill="#bdbdbd">05s</text><path d="M1261.5 755v4" stroke="#8a8a8a" stroke-width="1"/><text x="1324.8" y="753" font-size="11" fill="#bdbdbd">06s</text><path d="M1332.8 755v4" stroke="#8a8a8a" stroke-width="1"/><text x="1396.1" y="753" font-size="11" fill="#bdbdbd">07s</text><path d="M1404.1 755v4" stroke="#8a8a8a" stroke-width="1"/><text x="1467.4" y="753" font-size="11" fill="#bdbdbd">08s</text><path d="M1475.4 755v4" stroke="#8a8a8a" stroke-width="1"/><text x="1538.7" y="753" font-size="11" fill="#bdbdbd">09s</text><path d="M1546.7 755v4" stroke="#8a8a8a" stroke-width="1"/><text x="1610.0" y="753" font-size="11" fill="#bdbdbd">10s</text><path d="M1618.0 755v4" stroke="#8a8a8a" stroke-width="1"/><path d="M905 755v12M1547 755v10M1618.5 755v10" stroke="#cfcfcf" stroke-width="1" stroke-dasharray="3 1"/><rect x="893" y="742" width="8" height="13" fill="#232323"/><rect x="898" y="760" width="739" height="17" fill="#1f1f1f"/><rect x="960" y="761" width="553" height="15" fill="#6b6b6b"/><rect x="957" y="761" width="6" height="15" rx="2.5" fill="#4a8ee8"/><rect x="1510" y="761" width="6" height="15" rx="2.5" fill="#4a8ee8"/><rect x="905" y="777" width="687" height="3" fill="#3cac48"/><path d="M1641 763h11v8l-5.5 5-5.5-5z" fill="#d0d0d0"/><path d="M1641 790l5-4h6v6h-6z" fill="none" stroke="#c8c8c8" stroke-width="1.2"/><circle cx="1645" cy="793" r="2.5" fill="none" stroke="#c8c8c8" stroke-width="1.2"/><rect x="1642" y="800" width="10" height="150" rx="5" fill="#2c2c2c"/><rect x="323" y="762" width="575" height="18" fill="#2a2a2a"/><rect x="323" y="780" width="575" height="1" fill="#141414"/><path d="M327.5 771c3-5 9-5 12 0c-3 5-9 5-12 0z" fill="#c8c8c8"/><circle cx="333.5" cy="771" r="2.2" fill="#2a2a2a"/><path d="M344 768h2l3-3v12l-3-3h-2z" fill="#c8c8c8"/><path d="M351 767a5 5 0 0 1 0 8" stroke="#c8c8c8" fill="none" stroke-width="1.1"/><circle cx="363.5" cy="771" r="2.8" fill="#c8c8c8"/><path d="M375.5 770v-2.5a3 3 0 0 1 6 0v2.5" fill="none" stroke="#c8c8c8" stroke-width="1.5"/><rect x="373.5" y="770" width="10" height="7" fill="#c8c8c8"/><rect x="377.7" y="772" width="1.6" height="3" fill="#2a2a2a"/><path d="M390.5 764v14M422 764v14M455 764v14M627.5 764v14M764.5 764v14M881 764v14" stroke="#1a1a1a" stroke-width="1"/><path d="M404 765h6l5 5-5 5-6-6z" fill="#c8c8c8"/><circle cx="406.5" cy="767.5" r="1" fill="#2a2a2a"/><text x="427" y="775" font-size="9" fill="#9a9a9a">#</text><text x="441" y="775" font-size="9" fill="#9a9a9a">.</text><text x="461" y="775" font-size="10" fill="#9a9a9a">Layer Name</text><path d="M632 772a6 5 0 0 1 12 0z" fill="#d0d0d0"/><path d="M631 775h14M638 767v9" stroke="#d0d0d0" stroke-width="1.3"/><circle cx="635.5" cy="770" r="1" fill="#2a2a2a"/><circle cx="640.5" cy="770" r="1" fill="#2a2a2a"/><circle cx="653.5" cy="771" r="2.5" fill="none" stroke="#c8c8c8" stroke-width="1.1"/><path d="M653.5 765v2.5M653.5 774.5v2.5M647.5 771h2.5M657.0 771h2.5M649.3 766.8l1.7 1.7M656.0 773.5l1.7 1.7M657.7 766.8l-1.7 1.7M651.0 773.5l-1.7 1.7" stroke="#c8c8c8" stroke-width="1"/><path d="M663 765l10 11" stroke="#c8c8c8" stroke-width="1.3" stroke-dasharray="2 1"/><text x="676" y="775" font-size="14" font-style="italic" font-family="Liberation Serif" fill="#c8c8c8">fx</text><rect x="692.5" y="765.5" width="11" height="11" fill="none" stroke="#c8c8c8" stroke-width="1.2"/><path d="M695 768h6M695 771h6M695 774h6" stroke="#c8c8c8" stroke-width="1"/><circle cx="714" cy="770" r="4.5" fill="#9a9a9a"/><circle cx="712" cy="773" r="4.5" fill="none" stroke="#c8c8c8" stroke-width="1"/><circle cx="728.5" cy="771" r="5" fill="#c8c8c8"/><path d="M725 774.5a5 5 0 0 1 7-7z" fill="#5a5a5a"/><path d="M743 765l5 2.5v6l-5 2.5-5-2.5v-6z M738 767.5l5 2.5 5-2.5M743 770v6" fill="none" stroke="#c8c8c8" stroke-width="1.1"/><text x="770" y="775" font-size="10" fill="#9a9a9a">Parent &amp; Link</text><rect x="323" y="781" width="575" height="17" fill="#2b2b2b"/><rect x="323" y="797" width="575" height="1" fill="#1e1e1e"/><rect x="341" y="782" width="14" height="15" fill="#262626"/><rect x="356" y="782" width="14" height="15" fill="#262626"/><rect x="371" y="782" width="14" height="15" fill="#262626"/><path d="M327.5 789.5c3-5 9-5 12 0c-3 5-9 5-12 0z" fill="#d8d8d8"/><circle cx="333.5" cy="789.5" r="2.2" fill="#2a2a2a"/><path d="M375.5 788v-2.5a3 3 0 0 1 6 0v2.5" fill="none" stroke="#d8d8d8" stroke-width="1.5"/><rect x="373.5" y="788" width="10" height="7" fill="#d8d8d8"/><rect x="377.7" y="790" width="1.6" height="3" fill="#2a2a2a"/><path d="M396.5 785.5l4 4-4 4" fill="none" stroke="#9a9a9a" stroke-width="1.2"/><rect x="408" y="783" width="12" height="12" fill="#b8a98a"/><text x="428.5" y="794" font-size="12" font-weight="bold" fill="#c4c4c4">1</text><rect x="458" y="783" width="15" height="12" fill="#d0d0d0"/><rect x="460" y="785" width="11" height="8" fill="#6a5a60"/><circle cx="464" cy="788" r="2.5" fill="#4a9a8a"/><rect x="465" y="788" width="4" height="4" fill="#c05050"/><text x="478" y="794.5" font-size="12" font-weight="bold" fill="#c8c8c8" letter-spacing="0.3">[BG]</text><path d="M632 790.5a6 5 0 0 1 12 0z" fill="#d8d8d8"/><path d="M631 793.5h14M638 785.5v9" stroke="#d8d8d8" stroke-width="1.3"/><circle cx="635.5" cy="788.5" r="1" fill="#2a2a2a"/><circle cx="640.5" cy="788.5" r="1" fill="#2a2a2a"/><rect x="646" y="782" width="14" height="15" fill="#262626"/><path d="M663 795.5L673 783.5" stroke="#d0d0d0" stroke-width="1.4"/><rect x="707" y="782" width="14" height="15" fill="#272727"/><rect x="722" y="782" width="14" height="15" fill="#272727"/><rect x="737" y="782" width="14" height="15" fill="#272727"/><path d="M779 785.0A6 6 0 1 0 780.5 791.5M775 789.5a1.5 1.5 0 0 1 3 0a3 3 0 0 1-6 0a4.5 4.5 0 0 1 9-1" fill="none" stroke="#b8b8b8" stroke-width="1.2"/><rect x="788" y="782" width="89" height="15" fill="#222222"/><text x="795" y="794" font-size="11" fill="#c8c8c8">None</text><path d="M864 787.5l4 4 4-4" fill="none" stroke="#b0b0b0" stroke-width="1.2"/><rect x="898" y="781" width="739" height="17" fill="#2e2e2e"/><rect x="960" y="781" width="553" height="17" fill="#3a3a3a" opacity="0.5"/><rect x="898" y="797" width="739" height="1" fill="#1c1c1c"/><rect x="905" y="781" width="725" height="16" fill="#76684f"/><rect x="960" y="781" width="553" height="16" fill="#ffffff" opacity="0.035"/><rect x="323" y="798" width="575" height="17" fill="#2b2b2b"/><rect x="323" y="814" width="575" height="1" fill="#1e1e1e"/><rect x="341" y="799" width="14" height="15" fill="#262626"/><rect x="356" y="799" width="14" height="15" fill="#262626"/><rect x="371" y="799" width="14" height="15" fill="#262626"/><path d="M327.5 806.5c3-5 9-5 12 0c-3 5-9 5-12 0z" fill="#d8d8d8"/><circle cx="333.5" cy="806.5" r="2.2" fill="#2a2a2a"/><path d="M396.5 802.5l4 4-4 4" fill="none" stroke="#9a9a9a" stroke-width="1.2"/><rect x="408" y="800" width="12" height="12" fill="#e8d23e"/><text x="428.5" y="811" font-size="12" font-weight="bold" fill="#c4c4c4">2</text><polygon points="464.5,800.5 466.1,804.3 470.2,804.6 467.1,807.3 468.0,811.4 464.5,809.2 461.0,811.4 461.9,807.3 458.8,804.6 462.9,804.3" fill="#d0d0d0"/><g transform="translate(478.5 800.5) scale(1.0)"><path d="M2 2l2 2M10 2l-2 2M1 5h10M2 8.5h8M6 1v11" fill="none" stroke="#d4d4d4" stroke-width="1.7"/></g><g transform="translate(491.5 800.5) scale(1.0)"><path d="M1 1h10v11H1zM4 3h4v2H4zM3 7h6M4 7v4M8 7v4" fill="none" stroke="#d4d4d4" stroke-width="1.7"/></g><path d="M632 807.5a6 5 0 0 1 12 0z" fill="#d8d8d8"/><path d="M631 810.5h14M638 802.5v9" stroke="#d8d8d8" stroke-width="1.3"/><circle cx="635.5" cy="805.5" r="1" fill="#2a2a2a"/><circle cx="640.5" cy="805.5" r="1" fill="#2a2a2a"/><rect x="646" y="799" width="14" height="15" fill="#262626"/><circle cx="653.5" cy="806.5" r="2.5" fill="none" stroke="#707070" stroke-width="1.1"/><path d="M653.5 800.5v2.5M653.5 810.0v2.5M647.5 806.5h2.5M657.0 806.5h2.5M649.3 802.3l1.7 1.7M656.0 809.0l1.7 1.7M657.7 802.3l-1.7 1.7M651.0 809.0l-1.7 1.7" stroke="#707070" stroke-width="1"/><path d="M663 812.5L673 800.5" stroke="#d0d0d0" stroke-width="1.4"/><rect x="707" y="799" width="14" height="15" fill="#272727"/><rect x="722" y="799" width="14" height="15" fill="#272727"/><rect x="737" y="799" width="14" height="15" fill="#272727"/><path d="M779 802.0A6 6 0 1 0 780.5 808.5M775 806.5a1.5 1.5 0 0 1 3 0a3 3 0 0 1-6 0a4.5 4.5 0 0 1 9-1" fill="none" stroke="#b8b8b8" stroke-width="1.2"/><rect x="788" y="799" width="89" height="15" fill="#222222"/><text x="795" y="811" font-size="11" fill="#c8c8c8">None</text><path d="M864 804.5l4 4 4-4" fill="none" stroke="#b0b0b0" stroke-width="1.2"/><rect x="898" y="798" width="739" height="17" fill="#2e2e2e"/><rect x="960" y="798" width="553" height="17" fill="#3a3a3a" opacity="0.5"/><rect x="898" y="814" width="739" height="1" fill="#1c1c1c"/><rect x="905" y="798" width="725" height="16" fill="#968838"/><rect x="960" y="798" width="553" height="16" fill="#ffffff" opacity="0.035"/><rect x="323" y="815" width="575" height="17" fill="#2b2b2b"/><rect x="323" y="831" width="575" height="1" fill="#1e1e1e"/><rect x="341" y="816" width="14" height="15" fill="#262626"/><rect x="356" y="816" width="14" height="15" fill="#262626"/><rect x="371" y="816" width="14" height="15" fill="#262626"/><path d="M327.5 823.5c3-5 9-5 12 0c-3 5-9 5-12 0z" fill="#d8d8d8"/><circle cx="333.5" cy="823.5" r="2.2" fill="#2a2a2a"/><path d="M375.5 822v-2.5a3 3 0 0 1 6 0v2.5" fill="none" stroke="#d8d8d8" stroke-width="1.5"/><rect x="373.5" y="822" width="10" height="7" fill="#d8d8d8"/><rect x="377.7" y="824" width="1.6" height="3" fill="#2a2a2a"/><path d="M396.5 819.5l4 4-4 4" fill="none" stroke="#9a9a9a" stroke-width="1.2"/><rect x="408" y="817" width="12" height="12" fill="#5f86e8"/><text x="428.5" y="828" font-size="12" font-weight="bold" fill="#c4c4c4">3</text><polygon points="464.5,817.5 466.1,821.3 470.2,821.6 467.1,824.3 468.0,828.4 464.5,826.2 461.0,828.4 461.9,824.3 458.8,821.6 462.9,821.3" fill="#d0d0d0"/><g transform="translate(478.5 817.5) scale(1.0)"><path d="M1 2l1.5 1.5M1 6l1.5 1M1 12l2-4M4 1h7v3H4zM5 6h5v6H5zM5 9h5" fill="none" stroke="#d4d4d4" stroke-width="1.7"/></g><g transform="translate(491.5 817.5) scale(1.0)"><path d="M3 1v11M0 4h6M1 8l2-3M8 1l-1 2M10 1l1 2M6 4h5v3H6zM6 10h6M8.5 7v5" fill="none" stroke="#d4d4d4" stroke-width="1.7"/></g><path d="M632 824.5a6 5 0 0 1 12 0z" fill="#d8d8d8"/><path d="M631 827.5h14M638 819.5v9" stroke="#d8d8d8" stroke-width="1.3"/><circle cx="635.5" cy="822.5" r="1" fill="#2a2a2a"/><circle cx="640.5" cy="822.5" r="1" fill="#2a2a2a"/><rect x="646" y="816" width="14" height="15" fill="#262626"/><circle cx="653.5" cy="823.5" r="2.5" fill="none" stroke="#707070" stroke-width="1.1"/><path d="M653.5 817.5v2.5M653.5 827.0v2.5M647.5 823.5h2.5M657.0 823.5h2.5M649.3 819.3l1.7 1.7M656.0 826.0l1.7 1.7M657.7 819.3l-1.7 1.7M651.0 826.0l-1.7 1.7" stroke="#707070" stroke-width="1"/><path d="M663 829.5L673 817.5" stroke="#d0d0d0" stroke-width="1.4"/><rect x="707" y="816" width="14" height="15" fill="#272727"/><rect x="722" y="816" width="14" height="15" fill="#272727"/><rect x="737" y="816" width="14" height="15" fill="#272727"/><path d="M779 819.0A6 6 0 1 0 780.5 825.5M775 823.5a1.5 1.5 0 0 1 3 0a3 3 0 0 1-6 0a4.5 4.5 0 0 1 9-1" fill="none" stroke="#b8b8b8" stroke-width="1.2"/><rect x="788" y="816" width="89" height="15" fill="#222222"/><text x="795" y="828" font-size="11" fill="#c8c8c8">None</text><path d="M864 821.5l4 4 4-4" fill="none" stroke="#b0b0b0" stroke-width="1.2"/><rect x="898" y="815" width="739" height="17" fill="#2e2e2e"/><rect x="960" y="815" width="553" height="17" fill="#3a3a3a" opacity="0.5"/><rect x="898" y="831" width="739" height="1" fill="#1c1c1c"/><rect x="905" y="815" width="732" height="16" fill="#525c96"/><rect x="960" y="815" width="553" height="16" fill="#ffffff" opacity="0.035"/><rect x="323" y="832" width="575" height="17" fill="#2b2b2b"/><rect x="323" y="848" width="575" height="1" fill="#1e1e1e"/><rect x="341" y="833" width="14" height="15" fill="#262626"/><rect x="356" y="833" width="14" height="15" fill="#262626"/><rect x="371" y="833" width="14" height="15" fill="#262626"/><path d="M327.5 840.5c3-5 9-5 12 0c-3 5-9 5-12 0z" fill="#d8d8d8"/><circle cx="333.5" cy="840.5" r="2.2" fill="#2a2a2a"/><path d="M396.5 836.5l4 4-4 4" fill="none" stroke="#9a9a9a" stroke-width="1.2"/><rect x="408" y="834" width="12" height="12" fill="#e8d23e"/><text x="428.5" y="845" font-size="12" font-weight="bold" fill="#c4c4c4">4</text><polygon points="464.5,834.5 466.1,838.3 470.2,838.6 467.1,841.3 468.0,845.4 464.5,843.2 461.0,845.4 461.9,841.3 458.8,838.6 462.9,838.3" fill="#d0d0d0"/><g transform="translate(478.5 834.5) scale(1.0)"><path d="M2 2l2 2M10 2l-2 2M1 5h10M2 8.5h8M6 1v11" fill="none" stroke="#d4d4d4" stroke-width="1.7"/></g><g transform="translate(491.5 834.5) scale(1.0)"><path d="M1 1h10v11H1zM4 3h4v2H4zM3 7h6M4 7v4M8 7v4" fill="none" stroke="#d4d4d4" stroke-width="1.7"/></g><text x="504" y="845.5" font-size="12" font-weight="bold" fill="#c8c8c8" letter-spacing="0.3">back 2</text><path d="M632 841.5a6 5 0 0 1 12 0z" fill="#d8d8d8"/><path d="M631 844.5h14M638 836.5v9" stroke="#d8d8d8" stroke-width="1.3"/><circle cx="635.5" cy="839.5" r="1" fill="#2a2a2a"/><circle cx="640.5" cy="839.5" r="1" fill="#2a2a2a"/><rect x="646" y="833" width="14" height="15" fill="#262626"/><circle cx="653.5" cy="840.5" r="2.5" fill="none" stroke="#707070" stroke-width="1.1"/><path d="M653.5 834.5v2.5M653.5 844.0v2.5M647.5 840.5h2.5M657.0 840.5h2.5M649.3 836.3l1.7 1.7M656.0 843.0l1.7 1.7M657.7 836.3l-1.7 1.7M651.0 843.0l-1.7 1.7" stroke="#707070" stroke-width="1"/><path d="M663 846.5L673 834.5" stroke="#d0d0d0" stroke-width="1.4"/><rect x="707" y="833" width="14" height="15" fill="#272727"/><rect x="722" y="833" width="14" height="15" fill="#272727"/><rect x="737" y="833" width="14" height="15" fill="#272727"/><path d="M779 836.0A6 6 0 1 0 780.5 842.5M775 840.5a1.5 1.5 0 0 1 3 0a3 3 0 0 1-6 0a4.5 4.5 0 0 1 9-1" fill="none" stroke="#b8b8b8" stroke-width="1.2"/><rect x="788" y="833" width="89" height="15" fill="#222222"/><text x="794" y="845" font-size="11" fill="#c8c8c8">2.</text><g transform="translate(806 835) scale(0.9166666666666666)"><path d="M2 2l2 2M10 2l-2 2M1 5h10M2 8.5h8M6 1v11" fill="none" stroke="#c8c8c8" stroke-width="1.3"/></g><g transform="translate(820 835) scale(0.9166666666666666)"><path d="M1 1h10v11H1zM4 3h4v2H4zM3 7h6M4 7v4M8 7v4" fill="none" stroke="#c8c8c8" stroke-width="1.3"/></g><path d="M864 838.5l4 4 4-4" fill="none" stroke="#b0b0b0" stroke-width="1.2"/><rect x="898" y="832" width="739" height="17" fill="#2e2e2e"/><rect x="960" y="832" width="553" height="17" fill="#3a3a3a" opacity="0.5"/><rect x="898" y="848" width="739" height="1" fill="#1c1c1c"/><rect x="1096" y="834" width="5" height="13" fill="#b8a84a"/><rect x="323" y="849" width="575" height="17" fill="#2b2b2b"/><rect x="323" y="865" width="575" height="1" fill="#1e1e1e"/><rect x="341" y="850" width="14" height="15" fill="#262626"/><rect x="356" y="850" width="14" height="15" fill="#262626"/><rect x="371" y="850" width="14" height="15" fill="#262626"/><path d="M396.5 853.5l4 4-4 4" fill="none" stroke="#9a9a9a" stroke-width="1.2"/><rect x="408" y="851" width="12" height="12" fill="#6a8ae8"/><text x="428.5" y="862" font-size="12" font-weight="bold" fill="#c4c4c4">6</text><polygon points="464.5,851.5 466.1,855.3 470.2,855.6 467.1,858.3 468.0,862.4 464.5,860.2 461.0,862.4 461.9,858.3 458.8,855.6 462.9,855.3" fill="#d0d0d0"/><text x="478" y="862.5" font-size="12" font-weight="bold" fill="#c8c8c8" letter-spacing="0.3">Ball 3</text><path d="M632 858.5a6 5 0 0 1 12 0z" fill="#d8d8d8"/><path d="M631 861.5h14M638 853.5v9" stroke="#d8d8d8" stroke-width="1.3"/><circle cx="635.5" cy="856.5" r="1" fill="#2a2a2a"/><circle cx="640.5" cy="856.5" r="1" fill="#2a2a2a"/><rect x="646" y="850" width="14" height="15" fill="#262626"/><circle cx="653.5" cy="857.5" r="2.5" fill="none" stroke="#707070" stroke-width="1.1"/><path d="M653.5 851.5v2.5M653.5 861.0v2.5M647.5 857.5h2.5M657.0 857.5h2.5M649.3 853.3l1.7 1.7M656.0 860.0l1.7 1.7M657.7 853.3l-1.7 1.7M651.0 860.0l-1.7 1.7" stroke="#707070" stroke-width="1"/><path d="M663 863.5L673 851.5" stroke="#d0d0d0" stroke-width="1.4"/><text x="676" y="862.5" font-size="14" font-style="italic" font-family="Liberation Serif" fill="#c8c8c8">fx</text><rect x="707" y="850" width="14" height="15" fill="#272727"/><rect x="722" y="850" width="14" height="15" fill="#272727"/><rect x="737" y="850" width="14" height="15" fill="#272727"/><path d="M779 853.0A6 6 0 1 0 780.5 859.5M775 857.5a1.5 1.5 0 0 1 3 0a3 3 0 0 1-6 0a4.5 4.5 0 0 1 9-1" fill="none" stroke="#b8b8b8" stroke-width="1.2"/><rect x="788" y="850" width="89" height="15" fill="#222222"/><text x="795" y="862" font-size="11" fill="#c8c8c8">None</text><path d="M864 855.5l4 4 4-4" fill="none" stroke="#b0b0b0" stroke-width="1.2"/><rect x="898" y="849" width="739" height="17" fill="#2e2e2e"/><rect x="960" y="849" width="553" height="17" fill="#3a3a3a" opacity="0.5"/><rect x="898" y="865" width="739" height="1" fill="#1c1c1c"/><rect x="905" y="849" width="687" height="16" fill="#525c94"/><rect x="960" y="849" width="553" height="16" fill="#ffffff" opacity="0.035"/><rect x="323" y="866" width="575" height="17" fill="#333333"/><rect x="323" y="882" width="575" height="1" fill="#1e1e1e"/><rect x="341" y="867" width="14" height="15" fill="#262626"/><rect x="356" y="867" width="14" height="15" fill="#262626"/><rect x="371" y="867" width="14" height="15" fill="#262626"/><path d="M327.5 874.5c3-5 9-5 12 0c-3 5-9 5-12 0z" fill="#d8d8d8"/><circle cx="333.5" cy="874.5" r="2.2" fill="#2a2a2a"/><path d="M394.5 872.5l4 4 4-4" fill="none" stroke="#9a9a9a" stroke-width="1.2"/><rect x="408" y="868" width="12" height="12" fill="#6a8ae8"/><text x="428.5" y="879" font-size="12" font-weight="bold" fill="#c4c4c4">7</text><polygon points="464.5,868.5 466.1,872.3 470.2,872.6 467.1,875.3 468.0,879.4 464.5,877.2 461.0,879.4 461.9,875.3 458.8,872.6 462.9,872.3" fill="#d0d0d0"/><rect x="474.5" y="866.5" width="152" height="15" fill="#3d3d3d" stroke="#cfcfcf" stroke-width="1.2"/><text x="478" y="879.5" font-size="12" font-weight="bold" fill="#c8c8c8" letter-spacing="0.3">Ball</text><path d="M632 875.5a6 5 0 0 1 12 0z" fill="#d8d8d8"/><path d="M631 878.5h14M638 870.5v9" stroke="#d8d8d8" stroke-width="1.3"/><circle cx="635.5" cy="873.5" r="1" fill="#2a2a2a"/><circle cx="640.5" cy="873.5" r="1" fill="#2a2a2a"/><rect x="646" y="867" width="14" height="15" fill="#262626"/><circle cx="653.5" cy="874.5" r="2.5" fill="none" stroke="#707070" stroke-width="1.1"/><path d="M653.5 868.5v2.5M653.5 878.0v2.5M647.5 874.5h2.5M657.0 874.5h2.5M649.3 870.3l1.7 1.7M656.0 877.0l1.7 1.7M657.7 870.3l-1.7 1.7M651.0 877.0l-1.7 1.7" stroke="#707070" stroke-width="1"/><path d="M663 880.5L673 868.5" stroke="#d0d0d0" stroke-width="1.4"/><text x="676" y="879.5" font-size="14" font-style="italic" font-family="Liberation Serif" fill="#c8c8c8">fx</text><rect x="707" y="867" width="14" height="15" fill="#272727"/><rect x="722" y="867" width="14" height="15" fill="#272727"/><rect x="737" y="867" width="14" height="15" fill="#272727"/><path d="M779 870.0A6 6 0 1 0 780.5 876.5M775 874.5a1.5 1.5 0 0 1 3 0a3 3 0 0 1-6 0a4.5 4.5 0 0 1 9-1" fill="none" stroke="#b8b8b8" stroke-width="1.2"/><rect x="788" y="867" width="89" height="15" fill="#222222"/><text x="795" y="879" font-size="11" fill="#c8c8c8">None</text><path d="M864 872.5l4 4 4-4" fill="none" stroke="#b0b0b0" stroke-width="1.2"/><rect x="898" y="866" width="739" height="17" fill="#2e2e2e"/><rect x="960" y="866" width="553" height="17" fill="#3a3a3a" opacity="0.5"/><rect x="898" y="882" width="739" height="1" fill="#1c1c1c"/><rect x="905" y="866" width="687" height="16" fill="#5a78d6"/><rect x="960" y="866" width="553" height="16" fill="#ffffff" opacity="0.035"/><rect x="905" y="866" width="687" height="1.5" fill="#c8d0f8"/><rect x="323" y="883" width="575" height="17" fill="#252525"/><path d="M330 891.5l5-4v8z M361 887.5l5 4-5 4z" fill="#c8c8c8"/><path d="M348.5 887l4 4.5-4 4.5-4-4.5z" fill="none" stroke="#c8c8c8" stroke-width="1.1"/><circle cx="449" cy="892.5" r="5" fill="none" stroke="#4a8ee8" stroke-width="1.3"/><path d="M449 892.5l2-3M447 886h4" stroke="#4a8ee8" stroke-width="1.2"/><path d="M462 887v10h11M464 895l3-5 2 3 3-4" fill="none" stroke="#c8c8c8" stroke-width="1.1"/><rect x="477" y="884" width="151" height="16" fill="#3a3a3a"/><text x="481" y="896" font-size="11" fill="#9a9a9a">Position</text><text x="634" y="896" font-size="11" fill="#4d86d8">1421.6,668.1</text><path d="M792 887.0A6 6 0 1 0 793.5 893.5M788 891.5a1.5 1.5 0 0 1 3 0a3 3 0 0 1-6 0a4.5 4.5 0 0 1 9-1" fill="none" stroke="#b8b8b8" stroke-width="1.2"/><rect x="898" y="883" width="739" height="17" fill="#272727"/><path d="M901.5 888h9Q907 890 907.3 892.5Q907 895 910.5 897h-9Q905 895 904.7 892.5Q905 890 901.5 888z" fill="#cfcfcf"/><path d="M932.5 888h9Q938 890 938.3 892.5Q938 895 941.5 897h-9Q936 895 935.7 892.5Q936 890 932.5 888z" fill="#cfcfcf"/><path d="M972.0 888h9Q977.5 890 977.8 892.5Q977.5 895 981.0 897h-9Q975.5 895 975.2 892.5Q975.5 890 972.0 888z" fill="#cfcfcf"/><path d="M1020.0 888h9Q1025.5 890 1025.8 892.5Q1025.5 895 1029.0 897h-9Q1023.5 895 1023.2 892.5Q1023.5 890 1020.0 888z" fill="#cfcfcf"/><path d="M1081.8 888h9Q1087.3 890 1087.6 892.5Q1087.3 895 1090.8 897h-9Q1085.3 895 1085.0 892.5Q1085.3 890 1081.8 888z" fill="#cfcfcf"/><path d="M1101.0 888h9Q1106.5 890 1106.8 892.5Q1106.5 895 1110.0 897h-9Q1104.5 895 1104.2 892.5Q1104.5 890 1101.0 888z" fill="#cfcfcf"/><path d="M1116.5 888h9Q1122 890 1122.3 892.5Q1122 895 1125.5 897h-9Q1120 895 1119.7 892.5Q1120 890 1116.5 888z" fill="#cfcfcf"/><path d="M1133.5 888h9Q1139 890 1139.3 892.5Q1139 895 1142.5 897h-9Q1137 895 1136.7 892.5Q1137 890 1133.5 888z" fill="#cfcfcf"/><path d="M1153.5 888h9Q1159 890 1159.3 892.5Q1159 895 1162.5 897h-9Q1157 895 1156.7 892.5Q1157 890 1153.5 888z" fill="#cfcfcf"/><path d="M1226.5 888h9Q1232 890 1232.3 892.5Q1232 895 1235.5 897h-9Q1230 895 1229.7 892.5Q1230 890 1226.5 888z" fill="#cfcfcf"/><path d="M1262.0 888h9Q1267.5 890 1267.8 892.5Q1267.5 895 1271.0 897h-9Q1265.5 895 1265.2 892.5Q1265.5 890 1262.0 888z" fill="#cfcfcf"/><path d="M1291.0 888h9Q1296.5 890 1296.8 892.5Q1296.5 895 1300.0 897h-9Q1294.5 895 1294.2 892.5Q1294.5 890 1291.0 888z" fill="#cfcfcf"/><path d="M1309.5 888h9Q1315 890 1315.3 892.5Q1315 895 1318.5 897h-9Q1313 895 1312.7 892.5Q1313 890 1309.5 888z" fill="#cfcfcf"/><path d="M1324.0 888h9Q1329.5 890 1329.8 892.5Q1329.5 895 1333.0 897h-9Q1327.5 895 1327.2 892.5Q1327.5 890 1324.0 888z" fill="#cfcfcf"/><path d="M1414.5 888h9Q1420 890 1420.3 892.5Q1420 895 1423.5 897h-9Q1418 895 1417.7 892.5Q1418 890 1414.5 888z" fill="#cfcfcf"/><path d="M1462.0 888h9Q1467.5 890 1467.8 892.5Q1467.5 895 1471.0 897h-9Q1465.5 895 1465.2 892.5Q1465.5 890 1462.0 888z" fill="#cfcfcf"/><circle cx="923.3" cy="892.5" r="2.6" fill="#cfcfcf"/><circle cx="958" cy="892.5" r="2.6" fill="#cfcfcf"/><circle cx="968.3" cy="892.5" r="2.6" fill="#cfcfcf"/><rect x="1049" y="890" width="10" height="5" rx="2.5" fill="#cfcfcf"/><path d="M1172 888h27.5q-3.5 1.5-2.5 4.5q-1 3 2.5 4.5h-27.5q3.5-1.5 2.5-4.5q1-3-2.5-4.5z" fill="#cfcfcf"/><circle cx="1180" cy="892.5" r="1.6" fill="#333"/><path d="M1337.5 888h25q-3.5 1.5-2.5 4.5q-1 3 2.5 4.5h-25q3.5-1.5 2.5-4.5q1-3-2.5-4.5z" fill="#cfcfcf"/><circle cx="1346" cy="892.5" r="1.5" fill="#333"/><circle cx="1353" cy="892.5" r="1.5" fill="#333"/><rect x="323" y="900" width="575" height="17" fill="#2b2b2b"/><rect x="323" y="916" width="575" height="1" fill="#1e1e1e"/><rect x="341" y="901" width="14" height="15" fill="#262626"/><rect x="356" y="901" width="14" height="15" fill="#262626"/><rect x="371" y="901" width="14" height="15" fill="#262626"/><path d="M327.5 908.5c3-5 9-5 12 0c-3 5-9 5-12 0z" fill="#d8d8d8"/><circle cx="333.5" cy="908.5" r="2.2" fill="#2a2a2a"/><path d="M375.5 907v-2.5a3 3 0 0 1 6 0v2.5" fill="none" stroke="#d8d8d8" stroke-width="1.5"/><rect x="373.5" y="907" width="10" height="7" fill="#d8d8d8"/><rect x="377.7" y="909" width="1.6" height="3" fill="#2a2a2a"/><path d="M396.5 904.5l4 4-4 4" fill="none" stroke="#9a9a9a" stroke-width="1.2"/><rect x="408" y="902" width="12" height="12" fill="#3aa8b8"/><text x="428.5" y="913" font-size="12" font-weight="bold" fill="#c4c4c4">8</text><polygon points="464.5,902.5 466.1,906.3 470.2,906.6 467.1,909.3 468.0,913.4 464.5,911.2 461.0,913.4 461.9,909.3 458.8,906.6 462.9,906.3" fill="#d0d0d0"/><text x="478" y="913.5" font-size="12" font-weight="bold" fill="#c8c8c8" letter-spacing="0.3">top 2</text><path d="M632 909.5a6 5 0 0 1 12 0z" fill="#d8d8d8"/><path d="M631 912.5h14M638 904.5v9" stroke="#d8d8d8" stroke-width="1.3"/><circle cx="635.5" cy="907.5" r="1" fill="#2a2a2a"/><circle cx="640.5" cy="907.5" r="1" fill="#2a2a2a"/><rect x="646" y="901" width="14" height="15" fill="#262626"/><circle cx="653.5" cy="908.5" r="2.5" fill="none" stroke="#707070" stroke-width="1.1"/><path d="M653.5 902.5v2.5M653.5 912.0v2.5M647.5 908.5h2.5M657.0 908.5h2.5M649.3 904.3l1.7 1.7M656.0 911.0l1.7 1.7M657.7 904.3l-1.7 1.7M651.0 911.0l-1.7 1.7" stroke="#707070" stroke-width="1"/><path d="M663 914.5L673 902.5" stroke="#d0d0d0" stroke-width="1.4"/><rect x="707" y="901" width="14" height="15" fill="#272727"/><rect x="722" y="901" width="14" height="15" fill="#272727"/><rect x="737" y="901" width="14" height="15" fill="#272727"/><path d="M779 904.0A6 6 0 1 0 780.5 910.5M775 908.5a1.5 1.5 0 0 1 3 0a3 3 0 0 1-6 0a4.5 4.5 0 0 1 9-1" fill="none" stroke="#b8b8b8" stroke-width="1.2"/><rect x="788" y="901" width="89" height="15" fill="#222222"/><text x="795" y="913" font-size="11" fill="#c8c8c8">None</text><path d="M864 906.5l4 4 4-4" fill="none" stroke="#b0b0b0" stroke-width="1.2"/><rect x="898" y="900" width="739" height="17" fill="#2e2e2e"/><rect x="960" y="900" width="553" height="17" fill="#3a3a3a" opacity="0.5"/><rect x="898" y="916" width="739" height="1" fill="#1c1c1c"/><rect x="905" y="900" width="725" height="16" fill="#397a7c"/><rect x="960" y="900" width="553" height="16" fill="#ffffff" opacity="0.035"/><rect x="323" y="917" width="575" height="17" fill="#2b2b2b"/><rect x="323" y="933" width="575" height="1" fill="#1e1e1e"/><rect x="341" y="918" width="14" height="15" fill="#262626"/><rect x="356" y="918" width="14" height="15" fill="#262626"/><rect x="371" y="918" width="14" height="15" fill="#262626"/><path d="M327.5 925.5c3-5 9-5 12 0c-3 5-9 5-12 0z" fill="#d8d8d8"/><circle cx="333.5" cy="925.5" r="2.2" fill="#2a2a2a"/><path d="M375.5 924v-2.5a3 3 0 0 1 6 0v2.5" fill="none" stroke="#d8d8d8" stroke-width="1.5"/><rect x="373.5" y="924" width="10" height="7" fill="#d8d8d8"/><rect x="377.7" y="926" width="1.6" height="3" fill="#2a2a2a"/><path d="M396.5 921.5l4 4-4 4" fill="none" stroke="#9a9a9a" stroke-width="1.2"/><rect x="408" y="919" width="12" height="12" fill="#3aa8b8"/><text x="428.5" y="930" font-size="12" font-weight="bold" fill="#c4c4c4">9</text><polygon points="464.5,919.5 466.1,923.3 470.2,923.6 467.1,926.3 468.0,930.4 464.5,928.2 461.0,930.4 461.9,926.3 458.8,923.6 462.9,923.3" fill="#d0d0d0"/><text x="478" y="930.5" font-size="12" font-weight="bold" fill="#c8c8c8" letter-spacing="0.3">top back</text><path d="M632 926.5a6 5 0 0 1 12 0z" fill="#d8d8d8"/><path d="M631 929.5h14M638 921.5v9" stroke="#d8d8d8" stroke-width="1.3"/><circle cx="635.5" cy="924.5" r="1" fill="#2a2a2a"/><circle cx="640.5" cy="924.5" r="1" fill="#2a2a2a"/><rect x="646" y="918" width="14" height="15" fill="#262626"/><circle cx="653.5" cy="925.5" r="2.5" fill="none" stroke="#707070" stroke-width="1.1"/><path d="M653.5 919.5v2.5M653.5 929.0v2.5M647.5 925.5h2.5M657.0 925.5h2.5M649.3 921.3l1.7 1.7M656.0 928.0l1.7 1.7M657.7 921.3l-1.7 1.7M651.0 928.0l-1.7 1.7" stroke="#707070" stroke-width="1"/><path d="M663 931.5L673 919.5" stroke="#d0d0d0" stroke-width="1.4"/><rect x="707" y="918" width="14" height="15" fill="#272727"/><rect x="722" y="918" width="14" height="15" fill="#272727"/><rect x="737" y="918" width="14" height="15" fill="#272727"/><path d="M779 921.0A6 6 0 1 0 780.5 927.5M775 925.5a1.5 1.5 0 0 1 3 0a3 3 0 0 1-6 0a4.5 4.5 0 0 1 9-1" fill="none" stroke="#b8b8b8" stroke-width="1.2"/><rect x="788" y="918" width="89" height="15" fill="#222222"/><text x="795" y="930" font-size="11" fill="#c8c8c8">None</text><path d="M864 923.5l4 4 4-4" fill="none" stroke="#b0b0b0" stroke-width="1.2"/><rect x="898" y="917" width="739" height="17" fill="#2e2e2e"/><rect x="960" y="917" width="553" height="17" fill="#3a3a3a" opacity="0.5"/><rect x="898" y="933" width="739" height="1" fill="#1c1c1c"/><rect x="905" y="917" width="725" height="16" fill="#397a7c"/><rect x="960" y="917" width="553" height="16" fill="#ffffff" opacity="0.035"/><rect x="323" y="934" width="575" height="17" fill="#2b2b2b"/><rect x="323" y="950" width="575" height="1" fill="#1e1e1e"/><rect x="341" y="935" width="14" height="15" fill="#262626"/><rect x="356" y="935" width="14" height="15" fill="#262626"/><rect x="371" y="935" width="14" height="15" fill="#262626"/><path d="M327.5 942.5c3-5 9-5 12 0c-3 5-9 5-12 0z" fill="#d8d8d8"/><circle cx="333.5" cy="942.5" r="2.2" fill="#2a2a2a"/><path d="M375.5 941v-2.5a3 3 0 0 1 6 0v2.5" fill="none" stroke="#d8d8d8" stroke-width="1.5"/><rect x="373.5" y="941" width="10" height="7" fill="#d8d8d8"/><rect x="377.7" y="943" width="1.6" height="3" fill="#2a2a2a"/><path d="M396.5 938.5l4 4-4 4" fill="none" stroke="#9a9a9a" stroke-width="1.2"/><rect x="408" y="936" width="12" height="12" fill="#a9582e"/><text x="428.5" y="947" font-size="12" font-weight="bold" fill="#c4c4c4">10</text><polygon points="464.5,936.5 466.1,940.3 470.2,940.6 467.1,943.3 468.0,947.4 464.5,945.2 461.0,947.4 461.9,943.3 458.8,940.6 462.9,940.3" fill="#d0d0d0"/><text x="478" y="947.5" font-size="12" font-weight="bold" fill="#c8c8c8" letter-spacing="0.3">door top 2</text><path d="M632 943.5a6 5 0 0 1 12 0z" fill="#d8d8d8"/><path d="M631 946.5h14M638 938.5v9" stroke="#d8d8d8" stroke-width="1.3"/><circle cx="635.5" cy="941.5" r="1" fill="#2a2a2a"/><circle cx="640.5" cy="941.5" r="1" fill="#2a2a2a"/><rect x="646" y="935" width="14" height="15" fill="#262626"/><circle cx="653.5" cy="942.5" r="2.5" fill="none" stroke="#707070" stroke-width="1.1"/><path d="M653.5 936.5v2.5M653.5 946.0v2.5M647.5 942.5h2.5M657.0 942.5h2.5M649.3 938.3l1.7 1.7M656.0 945.0l1.7 1.7M657.7 938.3l-1.7 1.7M651.0 945.0l-1.7 1.7" stroke="#707070" stroke-width="1"/><path d="M663 948.5L673 936.5" stroke="#d0d0d0" stroke-width="1.4"/><rect x="707" y="935" width="14" height="15" fill="#272727"/><rect x="722" y="935" width="14" height="15" fill="#272727"/><rect x="737" y="935" width="14" height="15" fill="#272727"/><path d="M779 938.0A6 6 0 1 0 780.5 944.5M775 942.5a1.5 1.5 0 0 1 3 0a3 3 0 0 1-6 0a4.5 4.5 0 0 1 9-1" fill="none" stroke="#b8b8b8" stroke-width="1.2"/><rect x="788" y="935" width="89" height="15" fill="#222222"/><text x="795" y="947" font-size="11" fill="#c8c8c8">None</text><path d="M864 940.5l4 4 4-4" fill="none" stroke="#b0b0b0" stroke-width="1.2"/><rect x="898" y="934" width="739" height="17" fill="#2e2e2e"/><rect x="960" y="934" width="553" height="17" fill="#3a3a3a" opacity="0.5"/><rect x="898" y="950" width="739" height="1" fill="#1c1c1c"/><rect x="905" y="934" width="725" height="16" fill="#5f4333"/><rect x="960" y="934" width="553" height="16" fill="#ffffff" opacity="0.035"/><rect x="323" y="951" width="575" height="17" fill="#2b2b2b"/><rect x="323" y="967" width="575" height="1" fill="#1e1e1e"/><rect x="341" y="952" width="14" height="15" fill="#262626"/><rect x="356" y="952" width="14" height="15" fill="#262626"/><rect x="371" y="952" width="14" height="15" fill="#262626"/><path d="M327.5 959.5c3-5 9-5 12 0c-3 5-9 5-12 0z" fill="#d8d8d8"/><circle cx="333.5" cy="959.5" r="2.2" fill="#2a2a2a"/><path d="M375.5 958v-2.5a3 3 0 0 1 6 0v2.5" fill="none" stroke="#d8d8d8" stroke-width="1.5"/><rect x="373.5" y="958" width="10" height="7" fill="#d8d8d8"/><rect x="377.7" y="960" width="1.6" height="3" fill="#2a2a2a"/><path d="M396.5 955.5l4 4-4 4" fill="none" stroke="#9a9a9a" stroke-width="1.2"/><rect x="408" y="953" width="12" height="12" fill="#a9582e"/><text x="428.5" y="964" font-size="12" font-weight="bold" fill="#c4c4c4">11</text><polygon points="464.5,953.5 466.1,957.3 470.2,957.6 467.1,960.3 468.0,964.4 464.5,962.2 461.0,964.4 461.9,960.3 458.8,957.6 462.9,957.3" fill="#d0d0d0"/><text x="478" y="964.5" font-size="12" font-weight="bold" fill="#c8c8c8" letter-spacing="0.3">door top</text><path d="M632 960.5a6 5 0 0 1 12 0z" fill="#d8d8d8"/><path d="M631 963.5h14M638 955.5v9" stroke="#d8d8d8" stroke-width="1.3"/><circle cx="635.5" cy="958.5" r="1" fill="#2a2a2a"/><circle cx="640.5" cy="958.5" r="1" fill="#2a2a2a"/><rect x="646" y="952" width="14" height="15" fill="#262626"/><circle cx="653.5" cy="959.5" r="2.5" fill="none" stroke="#707070" stroke-width="1.1"/><path d="M653.5 953.5v2.5M653.5 963.0v2.5M647.5 959.5h2.5M657.0 959.5h2.5M649.3 955.3l1.7 1.7M656.0 962.0l1.7 1.7M657.7 955.3l-1.7 1.7M651.0 962.0l-1.7 1.7" stroke="#707070" stroke-width="1"/><path d="M663 965.5L673 953.5" stroke="#d0d0d0" stroke-width="1.4"/><rect x="707" y="952" width="14" height="15" fill="#272727"/><rect x="722" y="952" width="14" height="15" fill="#272727"/><rect x="737" y="952" width="14" height="15" fill="#272727"/><path d="M779 955.0A6 6 0 1 0 780.5 961.5M775 959.5a1.5 1.5 0 0 1 3 0a3 3 0 0 1-6 0a4.5 4.5 0 0 1 9-1" fill="none" stroke="#b8b8b8" stroke-width="1.2"/><rect x="788" y="952" width="89" height="15" fill="#222222"/><text x="795" y="964" font-size="11" fill="#c8c8c8">None</text><path d="M864 957.5l4 4 4-4" fill="none" stroke="#b0b0b0" stroke-width="1.2"/><rect x="898" y="951" width="739" height="17" fill="#2e2e2e"/><rect x="960" y="951" width="553" height="17" fill="#3a3a3a" opacity="0.5"/><rect x="898" y="967" width="739" height="1" fill="#1c1c1c"/><rect x="905" y="951" width="725" height="16" fill="#5f4333"/><rect x="960" y="951" width="553" height="16" fill="#ffffff" opacity="0.035"/><rect x="323" y="968" width="575" height="17" fill="#2b2b2b"/><rect x="323" y="984" width="575" height="1" fill="#1e1e1e"/><rect x="341" y="969" width="14" height="15" fill="#262626"/><rect x="356" y="969" width="14" height="15" fill="#262626"/><rect x="371" y="969" width="14" height="15" fill="#262626"/><path d="M327.5 976.5c3-5 9-5 12 0c-3 5-9 5-12 0z" fill="#d8d8d8"/><circle cx="333.5" cy="976.5" r="2.2" fill="#2a2a2a"/><path d="M375.5 975v-2.5a3 3 0 0 1 6 0v2.5" fill="none" stroke="#d8d8d8" stroke-width="1.5"/><rect x="373.5" y="975" width="10" height="7" fill="#d8d8d8"/><rect x="377.7" y="977" width="1.6" height="3" fill="#2a2a2a"/><path d="M396.5 972.5l4 4-4 4" fill="none" stroke="#9a9a9a" stroke-width="1.2"/><rect x="408" y="970" width="12" height="12" fill="#a9582e"/><text x="428.5" y="981" font-size="12" font-weight="bold" fill="#c4c4c4">12</text><polygon points="464.5,970.5 466.1,974.3 470.2,974.6 467.1,977.3 468.0,981.4 464.5,979.2 461.0,981.4 461.9,977.3 458.8,974.6 462.9,974.3" fill="#d0d0d0"/><text x="478" y="981.5" font-size="12" font-weight="bold" fill="#c8c8c8" letter-spacing="0.3">door</text><path d="M632 977.5a6 5 0 0 1 12 0z" fill="#d8d8d8"/><path d="M631 980.5h14M638 972.5v9" stroke="#d8d8d8" stroke-width="1.3"/><circle cx="635.5" cy="975.5" r="1" fill="#2a2a2a"/><circle cx="640.5" cy="975.5" r="1" fill="#2a2a2a"/><rect x="646" y="969" width="14" height="15" fill="#262626"/><circle cx="653.5" cy="976.5" r="2.5" fill="none" stroke="#707070" stroke-width="1.1"/><path d="M653.5 970.5v2.5M653.5 980.0v2.5M647.5 976.5h2.5M657.0 976.5h2.5M649.3 972.3l1.7 1.7M656.0 979.0l1.7 1.7M657.7 972.3l-1.7 1.7M651.0 979.0l-1.7 1.7" stroke="#707070" stroke-width="1"/><path d="M663 982.5L673 970.5" stroke="#d0d0d0" stroke-width="1.4"/><rect x="707" y="969" width="14" height="15" fill="#272727"/><rect x="722" y="969" width="14" height="15" fill="#272727"/><rect x="737" y="969" width="14" height="15" fill="#272727"/><path d="M779 972.0A6 6 0 1 0 780.5 978.5M775 976.5a1.5 1.5 0 0 1 3 0a3 3 0 0 1-6 0a4.5 4.5 0 0 1 9-1" fill="none" stroke="#b8b8b8" stroke-width="1.2"/><rect x="788" y="969" width="89" height="15" fill="#222222"/><text x="795" y="981" font-size="11" fill="#c8c8c8">None</text><path d="M864 974.5l4 4 4-4" fill="none" stroke="#b0b0b0" stroke-width="1.2"/><rect x="898" y="968" width="739" height="17" fill="#2e2e2e"/><rect x="960" y="968" width="553" height="17" fill="#3a3a3a" opacity="0.5"/><rect x="898" y="984" width="739" height="1" fill="#1c1c1c"/><rect x="905" y="968" width="725" height="16" fill="#5f4333"/><rect x="960" y="968" width="553" height="16" fill="#ffffff" opacity="0.035"/><rect x="323" y="985" width="575" height="17" fill="#2b2b2b"/><rect x="323" y="1001" width="575" height="1" fill="#1e1e1e"/><rect x="341" y="986" width="14" height="15" fill="#262626"/><rect x="356" y="986" width="14" height="15" fill="#262626"/><rect x="371" y="986" width="14" height="15" fill="#262626"/><path d="M327.5 993.5c3-5 9-5 12 0c-3 5-9 5-12 0z" fill="#d8d8d8"/><circle cx="333.5" cy="993.5" r="2.2" fill="#2a2a2a"/><path d="M396.5 989.5l4 4-4 4" fill="none" stroke="#9a9a9a" stroke-width="1.2"/><rect x="408" y="987" width="12" height="12" fill="#c4c4e6"/><text x="428.5" y="998" font-size="12" font-weight="bold" fill="#c4c4c4">13</text><polygon points="464.5,987.5 466.1,991.3 470.2,991.6 467.1,994.3 468.0,998.4 464.5,996.2 461.0,998.4 461.9,994.3 458.8,991.6 462.9,991.3" fill="#d0d0d0"/><text x="478" y="998.5" font-size="12" font-weight="bold" fill="#c8c8c8" letter-spacing="0.3">Ballright</text><path d="M632 994.5a6 5 0 0 1 12 0z" fill="#d8d8d8"/><path d="M631 997.5h14M638 989.5v9" stroke="#d8d8d8" stroke-width="1.3"/><circle cx="635.5" cy="992.5" r="1" fill="#2a2a2a"/><circle cx="640.5" cy="992.5" r="1" fill="#2a2a2a"/><rect x="646" y="986" width="14" height="15" fill="#262626"/><circle cx="653.5" cy="993.5" r="2.5" fill="none" stroke="#707070" stroke-width="1.1"/><path d="M653.5 987.5v2.5M653.5 997.0v2.5M647.5 993.5h2.5M657.0 993.5h2.5M649.3 989.3l1.7 1.7M656.0 996.0l1.7 1.7M657.7 989.3l-1.7 1.7M651.0 996.0l-1.7 1.7" stroke="#707070" stroke-width="1"/><path d="M663 999.5L673 987.5" stroke="#d0d0d0" stroke-width="1.4"/><text x="676" y="998.5" font-size="14" font-style="italic" font-family="Liberation Serif" fill="#c8c8c8">fx</text><rect x="707" y="986" width="14" height="15" fill="#272727"/><rect x="722" y="986" width="14" height="15" fill="#272727"/><rect x="737" y="986" width="14" height="15" fill="#272727"/><path d="M779 989.0A6 6 0 1 0 780.5 995.5M775 993.5a1.5 1.5 0 0 1 3 0a3 3 0 0 1-6 0a4.5 4.5 0 0 1 9-1" fill="none" stroke="#b8b8b8" stroke-width="1.2"/><rect x="788" y="986" width="89" height="15" fill="#222222"/><text x="795" y="998" font-size="11" fill="#c8c8c8">None</text><path d="M864 991.5l4 4 4-4" fill="none" stroke="#b0b0b0" stroke-width="1.2"/><rect x="898" y="985" width="739" height="17" fill="#2e2e2e"/><rect x="960" y="985" width="553" height="17" fill="#3a3a3a" opacity="0.5"/><rect x="898" y="1001" width="739" height="1" fill="#1c1c1c"/><rect x="905" y="985" width="725" height="16" fill="#7c7c8e"/><rect x="960" y="985" width="553" height="16" fill="#ffffff" opacity="0.035"/><rect x="323" y="1002" width="575" height="17" fill="#2b2b2b"/><rect x="323" y="1018" width="575" height="1" fill="#1e1e1e"/><rect x="341" y="1003" width="14" height="15" fill="#262626"/><rect x="356" y="1003" width="14" height="15" fill="#262626"/><rect x="371" y="1003" width="14" height="15" fill="#262626"/><path d="M327.5 1010.5c3-5 9-5 12 0c-3 5-9 5-12 0z" fill="#d8d8d8"/><circle cx="333.5" cy="1010.5" r="2.2" fill="#2a2a2a"/><path d="M396.5 1006.5l4 4-4 4" fill="none" stroke="#9a9a9a" stroke-width="1.2"/><rect x="408" y="1004" width="12" height="12" fill="#c4c4e6"/><text x="428.5" y="1015" font-size="12" font-weight="bold" fill="#c4c4c4">14</text><polygon points="464.5,1004.5 466.1,1008.3 470.2,1008.6 467.1,1011.3 468.0,1015.4 464.5,1013.2 461.0,1015.4 461.9,1011.3 458.8,1008.6 462.9,1008.3" fill="#d0d0d0"/><text x="478" y="1015.5" font-size="12" font-weight="bold" fill="#c8c8c8" letter-spacing="0.3">Ballleft</text><path d="M632 1011.5a6 5 0 0 1 12 0z" fill="#d8d8d8"/><path d="M631 1014.5h14M638 1006.5v9" stroke="#d8d8d8" stroke-width="1.3"/><circle cx="635.5" cy="1009.5" r="1" fill="#2a2a2a"/><circle cx="640.5" cy="1009.5" r="1" fill="#2a2a2a"/><rect x="646" y="1003" width="14" height="15" fill="#262626"/><circle cx="653.5" cy="1010.5" r="2.5" fill="none" stroke="#707070" stroke-width="1.1"/><path d="M653.5 1004.5v2.5M653.5 1014.0v2.5M647.5 1010.5h2.5M657.0 1010.5h2.5M649.3 1006.3l1.7 1.7M656.0 1013.0l1.7 1.7M657.7 1006.3l-1.7 1.7M651.0 1013.0l-1.7 1.7" stroke="#707070" stroke-width="1"/><path d="M663 1016.5L673 1004.5" stroke="#d0d0d0" stroke-width="1.4"/><text x="676" y="1015.5" font-size="14" font-style="italic" font-family="Liberation Serif" fill="#c8c8c8">fx</text><rect x="707" y="1003" width="14" height="15" fill="#272727"/><rect x="722" y="1003" width="14" height="15" fill="#272727"/><rect x="737" y="1003" width="14" height="15" fill="#272727"/><path d="M779 1006.0A6 6 0 1 0 780.5 1012.5M775 1010.5a1.5 1.5 0 0 1 3 0a3 3 0 0 1-6 0a4.5 4.5 0 0 1 9-1" fill="none" stroke="#b8b8b8" stroke-width="1.2"/><rect x="788" y="1003" width="89" height="15" fill="#222222"/><text x="795" y="1015" font-size="11" fill="#c8c8c8">None</text><path d="M864 1008.5l4 4 4-4" fill="none" stroke="#b0b0b0" stroke-width="1.2"/><rect x="898" y="1002" width="739" height="17" fill="#2e2e2e"/><rect x="960" y="1002" width="553" height="17" fill="#3a3a3a" opacity="0.5"/><rect x="898" y="1018" width="739" height="1" fill="#1c1c1c"/><rect x="905" y="1002" width="725" height="16" fill="#7c7c8e"/><rect x="960" y="1002" width="553" height="16" fill="#ffffff" opacity="0.035"/><rect x="323" y="1019" width="575" height="17" fill="#2b2b2b"/><rect x="323" y="1035" width="575" height="1" fill="#1e1e1e"/><rect x="341" y="1020" width="14" height="15" fill="#262626"/><rect x="356" y="1020" width="14" height="15" fill="#262626"/><rect x="371" y="1020" width="14" height="15" fill="#262626"/><path d="M327.5 1027.5c3-5 9-5 12 0c-3 5-9 5-12 0z" fill="#d8d8d8"/><circle cx="333.5" cy="1027.5" r="2.2" fill="#2a2a2a"/><path d="M396.5 1023.5l4 4-4 4" fill="none" stroke="#9a9a9a" stroke-width="1.2"/><rect x="408" y="1021" width="12" height="12" fill="#f4920e"/><text x="428.5" y="1032" font-size="12" font-weight="bold" fill="#c4c4c4">15</text><polygon points="464.5,1021.5 466.1,1025.3 470.2,1025.6 467.1,1028.3 468.0,1032.4 464.5,1030.2 461.0,1032.4 461.9,1028.3 458.8,1025.6 462.9,1025.3" fill="#d0d0d0"/><g transform="translate(478.5 1021.5) scale(1.0)"><path d="M6 1v10M2 4h8M1 7h10M3 8v4h6V8" fill="none" stroke="#d4d4d4" stroke-width="1.7"/></g><g transform="translate(491.5 1021.5) scale(1.0)"><path d="M3 1v11M0 4h6M1 9l4-2M6 2h6M9 2v10l-2-1" fill="none" stroke="#d4d4d4" stroke-width="1.7"/></g><path d="M632 1028.5a6 5 0 0 1 12 0z" fill="#d8d8d8"/><path d="M631 1031.5h14M638 1023.5v9" stroke="#d8d8d8" stroke-width="1.3"/><circle cx="635.5" cy="1026.5" r="1" fill="#2a2a2a"/><circle cx="640.5" cy="1026.5" r="1" fill="#2a2a2a"/><rect x="646" y="1020" width="14" height="15" fill="#262626"/><circle cx="653.5" cy="1027.5" r="2.5" fill="none" stroke="#707070" stroke-width="1.1"/><path d="M653.5 1021.5v2.5M653.5 1031.0v2.5M647.5 1027.5h2.5M657.0 1027.5h2.5M649.3 1023.3l1.7 1.7M656.0 1030.0l1.7 1.7M657.7 1023.3l-1.7 1.7M651.0 1030.0l-1.7 1.7" stroke="#707070" stroke-width="1"/><path d="M663 1033.5L673 1021.5" stroke="#d0d0d0" stroke-width="1.4"/><text x="676" y="1032.5" font-size="14" font-style="italic" font-family="Liberation Serif" fill="#c8c8c8">fx</text><rect x="707" y="1020" width="14" height="15" fill="#272727"/><rect x="722" y="1020" width="14" height="15" fill="#272727"/><rect x="737" y="1020" width="14" height="15" fill="#272727"/><path d="M779 1023.0A6 6 0 1 0 780.5 1029.5M775 1027.5a1.5 1.5 0 0 1 3 0a3 3 0 0 1-6 0a4.5 4.5 0 0 1 9-1" fill="none" stroke="#b8b8b8" stroke-width="1.2"/><rect x="788" y="1020" width="89" height="15" fill="#222222"/><text x="795" y="1032" font-size="11" fill="#c8c8c8">None</text><path d="M864 1025.5l4 4 4-4" fill="none" stroke="#b0b0b0" stroke-width="1.2"/><rect x="898" y="1019" width="739" height="17" fill="#2e2e2e"/><rect x="960" y="1019" width="553" height="17" fill="#3a3a3a" opacity="0.5"/><rect x="898" y="1035" width="739" height="1" fill="#1c1c1c"/><rect x="905" y="1019" width="725" height="16" fill="#aa7323"/><rect x="960" y="1019" width="553" height="16" fill="#ffffff" opacity="0.035"/><rect x="323" y="1036" width="575" height="17" fill="#2b2b2b"/><rect x="323" y="1052" width="575" height="1" fill="#1e1e1e"/><rect x="341" y="1037" width="14" height="15" fill="#262626"/><rect x="356" y="1037" width="14" height="15" fill="#262626"/><rect x="371" y="1037" width="14" height="15" fill="#262626"/><path d="M327.5 1044.5c3-5 9-5 12 0c-3 5-9 5-12 0z" fill="#d8d8d8"/><circle cx="333.5" cy="1044.5" r="2.2" fill="#2a2a2a"/><path d="M375.5 1043v-2.5a3 3 0 0 1 6 0v2.5" fill="none" stroke="#d8d8d8" stroke-width="1.5"/><rect x="373.5" y="1043" width="10" height="7" fill="#d8d8d8"/><rect x="377.7" y="1045" width="1.6" height="3" fill="#2a2a2a"/><path d="M396.5 1040.5l4 4-4 4" fill="none" stroke="#9a9a9a" stroke-width="1.2"/><rect x="408" y="1038" width="12" height="12" fill="#5f86e8"/><text x="428.5" y="1049" font-size="12" font-weight="bold" fill="#c4c4c4">16</text><polygon points="464.5,1038.5 466.1,1042.3 470.2,1042.6 467.1,1045.3 468.0,1049.4 464.5,1047.2 461.0,1049.4 461.9,1045.3 458.8,1042.6 462.9,1042.3" fill="#d0d0d0"/><g transform="translate(478.5 1038.5) scale(1.0)"><path d="M1 2l1.5 1.5M1 6l1.5 1M1 12l2-4M4 1h7v3H4zM5 6h5v6H5zM5 9h5" fill="none" stroke="#d4d4d4" stroke-width="1.7"/></g><g transform="translate(491.5 1038.5) scale(1.0)"><path d="M3 1v11M0 4h6M1 8l2-3M8 1l-1 2M10 1l1 2M6 4h5v3H6zM6 10h6M8.5 7v5" fill="none" stroke="#d4d4d4" stroke-width="1.7"/></g><text x="504" y="1049.5" font-size="12" font-weight="bold" fill="#c8c8c8" letter-spacing="0.3">back</text><path d="M632 1045.5a6 5 0 0 1 12 0z" fill="#d8d8d8"/><path d="M631 1048.5h14M638 1040.5v9" stroke="#d8d8d8" stroke-width="1.3"/><circle cx="635.5" cy="1043.5" r="1" fill="#2a2a2a"/><circle cx="640.5" cy="1043.5" r="1" fill="#2a2a2a"/><rect x="646" y="1037" width="14" height="15" fill="#262626"/><circle cx="653.5" cy="1044.5" r="2.5" fill="none" stroke="#707070" stroke-width="1.1"/><path d="M653.5 1038.5v2.5M653.5 1048.0v2.5M647.5 1044.5h2.5M657.0 1044.5h2.5M649.3 1040.3l1.7 1.7M656.0 1047.0l1.7 1.7M657.7 1040.3l-1.7 1.7M651.0 1047.0l-1.7 1.7" stroke="#707070" stroke-width="1"/><path d="M663 1050.5L673 1038.5" stroke="#d0d0d0" stroke-width="1.4"/><rect x="707" y="1037" width="14" height="15" fill="#272727"/><rect x="722" y="1037" width="14" height="15" fill="#272727"/><rect x="737" y="1037" width="14" height="15" fill="#272727"/><path d="M779 1040.0A6 6 0 1 0 780.5 1046.5M775 1044.5a1.5 1.5 0 0 1 3 0a3 3 0 0 1-6 0a4.5 4.5 0 0 1 9-1" fill="none" stroke="#b8b8b8" stroke-width="1.2"/><rect x="788" y="1037" width="89" height="15" fill="#222222"/><text x="795" y="1049" font-size="11" fill="#c8c8c8">None</text><path d="M864 1042.5l4 4 4-4" fill="none" stroke="#b0b0b0" stroke-width="1.2"/><rect x="898" y="1036" width="739" height="17" fill="#2e2e2e"/><rect x="960" y="1036" width="553" height="17" fill="#3a3a3a" opacity="0.5"/><rect x="898" y="1052" width="739" height="1" fill="#1c1c1c"/><rect x="905" y="1036" width="732" height="16" fill="#525e9a"/><rect x="960" y="1036" width="553" height="16" fill="#ffffff" opacity="0.035"/><rect x="323" y="1053" width="575" height="17" fill="#2b2b2b"/><rect x="323" y="1069" width="575" height="1" fill="#1e1e1e"/><rect x="341" y="1054" width="14" height="15" fill="#262626"/><rect x="356" y="1054" width="14" height="15" fill="#262626"/><rect x="371" y="1054" width="14" height="15" fill="#262626"/><path d="M327.5 1061.5c3-5 9-5 12 0c-3 5-9 5-12 0z" fill="#d8d8d8"/><circle cx="333.5" cy="1061.5" r="2.2" fill="#2a2a2a"/><path d="M396.5 1057.5l4 4-4 4" fill="none" stroke="#9a9a9a" stroke-width="1.2"/><rect x="408" y="1055" width="12" height="12" fill="#e8d23e"/><text x="428.5" y="1066" font-size="12" font-weight="bold" fill="#c4c4c4">17</text><polygon points="464.5,1055.5 466.1,1059.3 470.2,1059.6 467.1,1062.3 468.0,1066.4 464.5,1064.2 461.0,1066.4 461.9,1062.3 458.8,1059.6 462.9,1059.3" fill="#d0d0d0"/><g transform="translate(478.5 1055.5) scale(1.0)"><path d="M2 2l2 2M10 2l-2 2M1 5h10M2 8.5h8M6 1v11" fill="none" stroke="#d4d4d4" stroke-width="1.7"/></g><g transform="translate(491.5 1055.5) scale(1.0)"><path d="M1 1h10v11H1zM4 3h4v2H4zM3 7h6M4 7v4M8 7v4" fill="none" stroke="#d4d4d4" stroke-width="1.7"/></g><text x="504" y="1066.5" font-size="12" font-weight="bold" fill="#c8c8c8" letter-spacing="0.3">back</text><path d="M632 1062.5a6 5 0 0 1 12 0z" fill="#d8d8d8"/><path d="M631 1065.5h14M638 1057.5v9" stroke="#d8d8d8" stroke-width="1.3"/><circle cx="635.5" cy="1060.5" r="1" fill="#2a2a2a"/><circle cx="640.5" cy="1060.5" r="1" fill="#2a2a2a"/><rect x="646" y="1054" width="14" height="15" fill="#262626"/><circle cx="653.5" cy="1061.5" r="2.5" fill="none" stroke="#707070" stroke-width="1.1"/><path d="M653.5 1055.5v2.5M653.5 1065.0v2.5M647.5 1061.5h2.5M657.0 1061.5h2.5M649.3 1057.3l1.7 1.7M656.0 1064.0l1.7 1.7M657.7 1057.3l-1.7 1.7M651.0 1064.0l-1.7 1.7" stroke="#707070" stroke-width="1"/><path d="M663 1067.5L673 1055.5" stroke="#d0d0d0" stroke-width="1.4"/><rect x="707" y="1054" width="14" height="15" fill="#272727"/><rect x="722" y="1054" width="14" height="15" fill="#272727"/><rect x="737" y="1054" width="14" height="15" fill="#272727"/><path d="M779 1057.0A6 6 0 1 0 780.5 1063.5M775 1061.5a1.5 1.5 0 0 1 3 0a3 3 0 0 1-6 0a4.5 4.5 0 0 1 9-1" fill="none" stroke="#b8b8b8" stroke-width="1.2"/><rect x="788" y="1054" width="89" height="15" fill="#222222"/><text x="794" y="1066" font-size="11" fill="#c8c8c8">2.</text><g transform="translate(806 1056) scale(0.9166666666666666)"><path d="M2 2l2 2M10 2l-2 2M1 5h10M2 8.5h8M6 1v11" fill="none" stroke="#c8c8c8" stroke-width="1.3"/></g><g transform="translate(820 1056) scale(0.9166666666666666)"><path d="M1 1h10v11H1zM4 3h4v2H4zM3 7h6M4 7v4M8 7v4" fill="none" stroke="#c8c8c8" stroke-width="1.3"/></g><path d="M864 1059.5l4 4 4-4" fill="none" stroke="#b0b0b0" stroke-width="1.2"/><rect x="898" y="1053" width="739" height="17" fill="#2e2e2e"/><rect x="960" y="1053" width="553" height="17" fill="#3a3a3a" opacity="0.5"/><rect x="898" y="1069" width="739" height="1" fill="#1c1c1c"/><rect x="905" y="1053" width="725" height="16" fill="#968838"/><rect x="960" y="1053" width="553" height="16" fill="#ffffff" opacity="0.035"/><rect x="897" y="760" width="2" height="300" fill="#111"/><path d="M1059 745h11v8l-5.5 6-5.5-6z" fill="#4a8ee8"/><rect x="1064" y="755" width="1.3" height="305" fill="#6f9ee6"/><rect x="322" y="1060" width="1333" height="20" fill="#1f1f1f"/><rect x="329" y="1063" width="9" height="9" fill="none" stroke="#4a8ee8" stroke-width="1.2"/><rect x="332" y="1066" width="9" height="9" fill="none" stroke="#4a8ee8" stroke-width="1.2"/><rect x="347" y="1063" width="8" height="8" fill="none" stroke="#c0c0c0" stroke-width="1.2"/><rect x="351" y="1067" width="8" height="8" fill="none" stroke="#c0c0c0" stroke-width="1.2"/><path d="M366 1064h8v10h-8z M364 1067h2M364 1071h2M374 1067h2M374 1071h2" stroke="#c0c0c0" fill="none" stroke-width="1.4"/><rect x="627" y="1061" width="1" height="18" fill="#333"/><text x="635" y="1074" font-size="11" fill="#a0a0a0">Toggle Switches / Modes</text><path d="M904 1070l4-3 4 3z" fill="#c0c0c0"/><circle cx="929" cy="1070" r="4" fill="none" stroke="#c0c0c0" stroke-width="1.3"/><path d="M934 1070h36" stroke="#555" stroke-width="1"/><path d="M984 1072l5-5 3 3 3-3 5 5z" fill="#c0c0c0"/></svg><svg class="a" style="left:1658px;top:50px" width="262" height="1030" viewBox="1658 50 262 1030" font-family="Liberation Sans"><rect x="1658" y="50" width="262" height="1030" fill="#1b1b1b"/><rect x="1660" y="50" width="260" height="320" fill="#232323"/><text x="1672" y="68" font-size="11" fill="#c8c8c8">Motion Tools MDS</text><path d="M1773 61.0h9M1773 64.5h9M1773 68.0h9" stroke="#c0c0c0" stroke-width="1.2"/><rect x="1670" y="73" width="116" height="2" fill="#cfcfcf"/><text x="1805" y="68" font-size="11" fill="#8a8a8a">Align</text><rect x="1660" y="79" width="260" height="1" fill="#1c1c1c"/><text x="1675" y="95.5" font-size="10" font-weight="bold" fill="#8060e8" letter-spacing="-0.2">MOTION</text><text x="1675" y="105.5" font-size="10" font-weight="bold" fill="#8060e8" letter-spacing="-0.2">TOOLS v.1</text><text x="1803" y="101" font-size="9" font-weight="bold" fill="#d8d8d8">ABOUT</text><rect x="1667" y="114" width="198" height="75" fill="#262626" stroke="#2c2c2c"/><text x="1678" y="133.5" font-size="10" fill="#9a9a9a">&lt;</text><circle cx="1707.5" cy="130" r="7" fill="none" stroke="#b0b0b0" stroke-width="1.6"/><path d="M1715 130h67" stroke="#444" stroke-width="1.5"/><rect x="1796" y="121" width="38" height="18" rx="2" fill="#1a1a1a"/><text x="1801" y="134" font-size="11" fill="#c8c8c8">0</text><text x="1678" y="156.5" font-size="10" fill="#9a9a9a">&gt;</text><circle cx="1707.5" cy="153" r="7" fill="none" stroke="#b0b0b0" stroke-width="1.6"/><path d="M1715 153h67" stroke="#444" stroke-width="1.5"/><rect x="1796" y="144" width="38" height="18" rx="2" fill="#1a1a1a"/><text x="1801" y="157" font-size="11" fill="#c8c8c8">0</text><text x="1677" y="179.5" font-size="10" fill="#9a9a9a">&gt;&lt;</text><circle cx="1707.5" cy="176" r="7" fill="none" stroke="#b0b0b0" stroke-width="1.6"/><path d="M1715 176h67" stroke="#444" stroke-width="1.5"/><rect x="1796" y="167" width="38" height="18" rx="2" fill="#1a1a1a"/><text x="1801" y="180" font-size="11" fill="#c8c8c8">0</text><rect x="1849" y="127" width="6" height="6" fill="#e05a5a"/><path d="M1852 149l3.5 3.5-3.5 3.5-3.5-3.5z" fill="#e05a5a"/><circle cx="1852" cy="176" r="3.5" fill="#e05a5a"/><rect x="1667" y="195" width="104" height="110" fill="#262626" stroke="#2c2c2c"/><rect x="1679" y="212" width="19" height="19" fill="#7a68f2"/><rect x="1679" y="238" width="19" height="19" fill="#7a68f2"/><rect x="1679" y="264" width="19" height="19" fill="#7a68f2"/><rect x="1705" y="212" width="19" height="19" fill="#7a68f2"/><rect x="1705" y="238" width="19" height="19" fill="#7a68f2"/><rect x="1705" y="264" width="19" height="19" fill="#7a68f2"/><rect x="1731" y="212" width="19" height="19" fill="#7a68f2"/><rect x="1731" y="238" width="19" height="19" fill="#7a68f2"/><rect x="1731" y="264" width="19" height="19" fill="#7a68f2"/><path d="M1679 212h6v2h-4v4h-2zM1750 212h-6v2h4v4h2zM1679 283v-6h2v4h4v2zM1750 283v-6h-2v4h-4v2z" fill="#c8bcff"/><path d="M1679 238v19h2v-19zM1748 238v19h2v-19z" fill="#c8bcff"/><rect x="1706" y="239.5" width="16" height="16" fill="none" stroke="#c8bcff" stroke-width="2.5"/><rect x="1779" y="227" width="88" height="1" fill="#2c2c2c"/><rect x="1779" y="258" width="88" height="24" fill="#262626"/><text x="1783" y="212.5" font-size="9" font-weight="bold" fill="#d0d0d0" letter-spacing="-0.3">ELASTIC</text><text x="1783" y="243.5" font-size="9" font-weight="bold" fill="#d0d0d0" letter-spacing="-0.3">BOUNCE</text><text x="1783" y="274.5" font-size="9" font-weight="bold" fill="#d0d0d0" letter-spacing="-0.3">CLONE</text><path d="M1826 212c2-8 6-8 8 0s5 4 7 0 4-3 6 0 3 1 5 1" fill="none" stroke="#d0d0d0" stroke-width="1.1"/><path d="M1826 244c2-10 8-10 10 0c2-6 5-6 7 0c1-3 3-3 5 0" fill="none" stroke="#d0d0d0" stroke-width="1.1"/><path d="M1826 271l2.5-2.5 2.5 2.5-2.5 2.5zM1833 271l2.5-2.5 2.5 2.5-2.5 2.5z" fill="#e0e0e0"/><path d="M1840 271l2.5-2.5 2.5 2.5-2.5 2.5zM1847 271l2.5-2.5 2.5 2.5-2.5 2.5z" fill="none" stroke="#e0e0e0" stroke-width="0.9"/><text x="1808" y="298.5" font-size="9" font-weight="bold" fill="#c8c8c8">offset</text><text x="1844" y="298.5" font-size="9" font-weight="bold" fill="#c8c8c8">step</text><rect x="1667" y="306" width="66" height="27" fill="#262626" stroke="#2c2c2c"/><text x="1677" y="323" font-size="9" font-weight="bold" fill="#d0d0d0" letter-spacing="-0.3">SEQUENCE</text><path d="M1743 326h8v3h-8zM1747 322h8v3h-8zM1752 318h8v-3h-8z" fill="#d8d8d8"/><path d="M1748 313l-2-3h4z M1748 313v15" fill="#d8d8d8" stroke="#d8d8d8" stroke-width="0.8"/><path d="M1771 313h8v3h-8zM1775 318h8v3h-8zM1779 323h8v3h-8zM1785 328h8v-3h-8z" fill="#d8d8d8"/><rect x="1805" y="311" width="25" height="18" rx="2" fill="#1a1a1a"/><text x="1809" y="324" font-size="11" fill="#c8c8c8">1</text><rect x="1836" y="311" width="26" height="18" rx="2" fill="#1a1a1a"/><text x="1841" y="324" font-size="11" fill="#c8c8c8">1</text><rect x="1667" y="338" width="66" height="27" fill="#262626"/><rect x="1737" y="338" width="60" height="27" fill="#262626"/><rect x="1801" y="338" width="66" height="27" fill="#262626"/><text x="1681" y="355" font-size="9" font-weight="bold" fill="#d0d0d0" letter-spacing="-0.3">EXTRACT</text><text x="1752" y="355" font-size="9" font-weight="bold" fill="#d0d0d0" letter-spacing="-0.3">MERGE</text><text x="1813" y="355" font-size="9" font-weight="bold" fill="#d0d0d0" letter-spacing="-0.3">ADD NULL</text><rect x="1660" y="374" width="260" height="135" fill="#232323"/><text x="1659" y="389" font-size="11" fill="#8a8a8a">ay Dynamic Texture</text><text x="1800" y="389" font-size="11" fill="#c8c8c8">Character</text><path d="M1859 382.0h9M1859 385.5h9M1859 389.0h9" stroke="#c0c0c0" stroke-width="1.2"/><rect x="1799" y="395" width="69" height="2" fill="#cfcfcf"/><path d="M1905 381l4 4-4 4M1910 381l4 4-4 4" stroke="#c8c8c8" stroke-width="1.6" fill="none"/><rect x="1665" y="407" width="104" height="19" fill="#1c1c1c"/><rect x="1769" y="407" width="16" height="19" fill="#1e1e1e"/><text x="1672" y="421" font-size="11" fill="#c8c8c8">MF PuYue</text><path d="M1773 415l4 3.5 4-3.5" fill="none" stroke="#a0a0a0" stroke-width="1.1"/><rect x="1665" y="431" width="104" height="19" fill="#1c1c1c"/><rect x="1769" y="431" width="16" height="19" fill="#1e1e1e"/><text x="1672" y="445" font-size="11" fill="#c8c8c8">Regular</text><path d="M1773 439l4 3.5 4-3.5" fill="none" stroke="#a0a0a0" stroke-width="1.1"/><path d="M1795 426l8-8M1804 413a2.5 2.5 0 0 1 4 4l-3 3-4-4z" stroke="#c8c8c8" stroke-width="1.5" fill="#c8c8c8"/><rect x="1830" y="420" width="29" height="29" fill="#f8f8f8"/><path d="M1833 446l23-23" stroke="#8a2a2a" stroke-width="2"/><rect x="1836" y="426" width="17" height="17" fill="none" stroke="#1a1a1a" stroke-width="2"/><rect x="1817" y="407" width="28" height="29" fill="#fde664"/><path d="M1850 411c3 0 5 2 5 5M1853 414l2 3 2-3" fill="none" stroke="#d0d0d0" stroke-width="1.3"/><rect x="1791" y="432" width="20" height="9" fill="#111" stroke="#d8d8d8" stroke-width="1"/><rect x="1791" y="441" width="20" height="8" fill="#f4f4f4"/><rect x="1818" y="438" width="10" height="10" fill="#e8e8e8"/><path d="M1819 447l8-8" stroke="#8a2a2a" stroke-width="1"/><text x="1664" y="475" font-size="14" font-weight="bold" fill="#c8c8c8" font-family="Liberation Serif">T</text><text x="1671" y="475" font-size="17" font-weight="bold" fill="#c8c8c8" font-family="Liberation Serif">T</text><text x="1689" y="472" font-size="11" fill="#4a86d8">132</text><text x="1711" y="472" font-size="11" fill="#8a8a8a">px</text><path d="M1733 465h7l-3.5 5z" fill="#b0b0b0"/><text x="1772" y="468" font-size="9" fill="#c8c8c8">A</text><text x="1776" y="478" font-size="9" fill="#c8c8c8">A</text><path d="M1771 464v14M1769 466l2-2 2 2M1769 476l2 2 2-2" stroke="#c8c8c8" fill="none" stroke-width="1"/><text x="1801" y="472" font-size="11" fill="#4a86d8">51</text><text x="1817" y="472" font-size="11" fill="#8a8a8a">px</text><path d="M1846 465h7l-3.5 5z" fill="#b0b0b0"/><text x="1663" y="493" font-size="11" fill="#c8c8c8" letter-spacing="-2">V/A</text><path d="M1672 497h8M1673 495l-2 2 2 2" stroke="#c8c8c8" fill="none" stroke-width="1"/><text x="1691" y="492" font-size="11" fill="#5a5a5a">Metrics</text><path d="M1733 485h7l-3.5 5z" fill="#b0b0b0"/><rect x="1771" y="482" width="18" height="11" fill="#c8c8c8"/><text x="1772" y="491.5" font-size="10" font-weight="bold" fill="#232323" letter-spacing="-1">VA</text><path d="M1771 497h18M1773 495l-2 2 2 2M1787 495l2 2-2 2" stroke="#c8c8c8" fill="none" stroke-width="1"/><text x="1801" y="492" font-size="11" fill="#4a86d8">31</text><path d="M1846 485h7l-3.5 5z" fill="#b0b0b0"/><rect x="1660" y="511" width="260" height="57" fill="#232323"/><text x="1672" y="527" font-size="11" fill="#c8c8c8">Paragraph</text><path d="M1734 520.0h9M1734 523.5h9M1734 527.0h9" stroke="#c0c0c0" stroke-width="1.2"/><rect x="1667" y="541" width="19" height="19" fill="#1a2436"/><path d="M1670.5 545h12M1670.5 548h9M1670.5 551h12M1670.5 554h9M1670.5 557h12" stroke="#4a86d8" stroke-width="1.2"/><path d="M1695.0 545h12M1696.5 548h9M1695.0 551h12M1696.5 554h9M1695.0 557h12" stroke="#c0c0c0" stroke-width="1.2"/><path d="M1720 545h12M1723 548h9M1720 551h12M1723 554h9M1720 557h12" stroke="#c0c0c0" stroke-width="1.2"/><path d="M1749.5 545h12M1749.5 548h12M1749.5 551h12M1749.5 554h12M1749.5 557h10" stroke="#c0c0c0" stroke-width="1.2"/><path d="M1774.8 545h12M1774.8 548h12M1774.8 551h12M1774.8 554h12M1776.3 557h9" stroke="#c0c0c0" stroke-width="1.2"/><path d="M1799.7 545h12M1799.7 548h12M1799.7 551h12M1799.7 554h12M1802.7 557h9" stroke="#c0c0c0" stroke-width="1.2"/><path d="M1830 545h12M1830 548h12M1830 551h12M1830 554h12M1830 557h12" stroke="#c0c0c0" stroke-width="1.2"/><rect x="1660" y="571" width="260" height="40" fill="#232323"/><text x="1672" y="590" font-size="11" fill="#c8c8c8">EaseCopy</text><path d="M1730 583.0h9M1730 586.5h9M1730 590.0h9" stroke="#c0c0c0" stroke-width="1.2"/><rect x="1767" y="606" width="118" height="1" fill="#3a3a3a"/><rect x="1660" y="614" width="260" height="430" fill="#232323"/><text x="1672" y="634" font-size="11" fill="#c8c8c8">Effects &amp; Presets</text><path d="M1766 626.5h9M1766 630h9M1766 633.5h9" stroke="#c0c0c0" stroke-width="1.2"/><rect x="1665" y="645" width="247" height="19" fill="#1a1a1a"/><circle cx="1679" cy="652" r="3.5" fill="none" stroke="#c0c0c0" stroke-width="1.2"/><path d="M1676.5 654.5l-4 4M1682 657l2 2 2-2z" stroke="#c0c0c0" fill="#c0c0c0" stroke-width="1.2"/><rect x="1660" y="666" width="260" height="2" fill="#141414"/><path d="M1667 674.0l3 3.5-3 3.5" fill="none" stroke="#9a9a9a" stroke-width="1.1"/><text x="1676" y="681.5" font-size="12" fill="#c0c0c0">* Animation Presets</text><path d="M1667 691.05l3 3.5-3 3.5" fill="none" stroke="#9a9a9a" stroke-width="1.1"/><text x="1676" y="698.55" font-size="12" fill="#c0c0c0">3D Channel</text><path d="M1667 708.1l3 3.5-3 3.5" fill="none" stroke="#9a9a9a" stroke-width="1.1"/><text x="1676" y="715.6" font-size="12" fill="#c0c0c0">AESweets</text><path d="M1667 725.15l3 3.5-3 3.5" fill="none" stroke="#9a9a9a" stroke-width="1.1"/><text x="1676" y="732.65" font-size="12" fill="#c0c0c0">Audio</text><path d="M1667 742.2l3 3.5-3 3.5" fill="none" stroke="#9a9a9a" stroke-width="1.1"/><text x="1676" y="749.7" font-size="12" fill="#c0c0c0">BAO</text><path d="M1667 759.25l3 3.5-3 3.5" fill="none" stroke="#9a9a9a" stroke-width="1.1"/><text x="1676" y="766.75" font-size="12" fill="#c0c0c0">BGRA</text><path d="M1667 776.3l3 3.5-3 3.5" fill="none" stroke="#9a9a9a" stroke-width="1.1"/><text x="1676" y="783.8" font-size="12" fill="#c0c0c0">Blur &amp; Sharpen</text><path d="M1667 793.35l3 3.5-3 3.5" fill="none" stroke="#9a9a9a" stroke-width="1.1"/><text x="1676" y="800.85" font-size="12" fill="#c0c0c0">Boris FX Mocha</text><path d="M1667 810.4l3 3.5-3 3.5" fill="none" stroke="#9a9a9a" stroke-width="1.1"/><text x="1676" y="817.9" font-size="12" fill="#c0c0c0">Channel</text><path d="M1667 827.45l3 3.5-3 3.5" fill="none" stroke="#9a9a9a" stroke-width="1.1"/><text x="1676" y="834.95" font-size="12" fill="#c0c0c0">CINEMA 4D</text><path d="M1667 844.5l3 3.5-3 3.5" fill="none" stroke="#9a9a9a" stroke-width="1.1"/><text x="1676" y="852.0" font-size="12" fill="#c0c0c0">Color Correction</text><path d="M1667 861.55l3 3.5-3 3.5" fill="none" stroke="#9a9a9a" stroke-width="1.1"/><text x="1676" y="869.05" font-size="12" fill="#c0c0c0">Distort</text><path d="M1667 878.6l3 3.5-3 3.5" fill="none" stroke="#9a9a9a" stroke-width="1.1"/><text x="1676" y="886.1" font-size="12" fill="#c0c0c0">Expression Controls</text><path d="M1667 895.65l3 3.5-3 3.5" fill="none" stroke="#9a9a9a" stroke-width="1.1"/><text x="1676" y="903.15" font-size="12" fill="#c0c0c0">Film Emulation</text><path d="M1667 912.7l3 3.5-3 3.5" fill="none" stroke="#9a9a9a" stroke-width="1.1"/><text x="1676" y="920.2" font-size="12" fill="#c0c0c0">Generate</text><path d="M1667 929.75l3 3.5-3 3.5" fill="none" stroke="#9a9a9a" stroke-width="1.1"/><text x="1676" y="937.25" font-size="12" fill="#c0c0c0">Immersive Video</text><path d="M1667 946.8l3 3.5-3 3.5" fill="none" stroke="#9a9a9a" stroke-width="1.1"/><text x="1676" y="954.3" font-size="12" fill="#c0c0c0">Keying</text><path d="M1667 963.85l3 3.5-3 3.5" fill="none" stroke="#9a9a9a" stroke-width="1.1"/><text x="1676" y="971.35" font-size="12" fill="#c0c0c0">Matte</text><path d="M1667 980.9000000000001l3 3.5-3 3.5" fill="none" stroke="#9a9a9a" stroke-width="1.1"/><text x="1676" y="988.4000000000001" font-size="12" fill="#c0c0c0">Missing</text><path d="M1667 997.95l3 3.5-3 3.5" fill="none" stroke="#9a9a9a" stroke-width="1.1"/><text x="1676" y="1005.45" font-size="12" fill="#c0c0c0">Noise &amp; Grain</text><path d="M1667 1015.0l3 3.5-3 3.5" fill="none" stroke="#9a9a9a" stroke-width="1.1"/><text x="1676" y="1022.5" font-size="12" fill="#c0c0c0">Obsolete</text><rect x="1901" y="668" width="14" height="357" fill="#262626"/><rect x="1903" y="670" width="10" height="157" rx="5" fill="#3a3a3a"/><rect x="1660" y="1025" width="260" height="1" fill="#111"/><path d="M1881 1031h11v9h-11z" fill="#d0d0d0"/><path d="M1881 1031h4v4h-4z" fill="#232323"/><rect x="1660" y="1046" width="260" height="34" fill="#232323"/><text x="1672" y="1065" font-size="11" fill="#c8c8c8">Overlord</text><path d="M1725 1057.5h9M1725 1061h9M1725 1064.5h9" stroke="#c0c0c0" stroke-width="1.2"/></svg><div class="t" style="left:347px;top:131px;font-size:11px;font-weight:bold;color:#f0f0f0;letter-spacing:-0.4px;text-shadow:0 0 2px #000">Active Camera</div>
<svg class="a" style="left:0;top:0" width="180" height="50" viewBox="0 0 180 50">
<defs><filter id="wmb" x="-20%" y="-50%" width="140%" height="200%"><feGaussianBlur stdDeviation="4"/></filter></defs>
<rect x="8" y="9" width="150" height="24" rx="8" fill="#6a6a6a" opacity="0.55" filter="url(#wmb)"/>
<g fill="none" stroke="#f4f4f4" stroke-width="1.3" stroke-linecap="round">
<path d="M14 15h9v6h-9zM14 18h9M13 23h11M15 25h7v3h-7zM18.5 28v4M15 30l-2 2M22 30l2 2M30 14l-4 4M31 19l-5 5M31 25l-6 7"/>
<path d="M47 12v2M38 15h17M41 17l1 2M51 17l-1 2M37 20h19M40 23h13v9H40zM40 27.5h13"/>
<path d="M59 18h8M63 13v19M59 27l8-3M69 16h9M73 13l-2 8h7l-4 6M71 28l4 4"/>
<path d="M79 14h16M87 13v4M80 17v2M94 17v2M81 18l2 1M89 18l2 1M80 21h7M81 21v11M86 21v11M81 25h5M81 28h5M88 21h7v11M88 25h7M88 28h7M91.5 21v11"/>
</g>
</svg>
<div class="t" style="left:99px;top:11px;font-size:23px;font-weight:bold;color:#ffffff;letter-spacing:0.8px;-webkit-text-stroke:0.7px #fff;text-shadow:0 0 3px rgba(0,0,0,0.6)">2020</div>

</body></html>
